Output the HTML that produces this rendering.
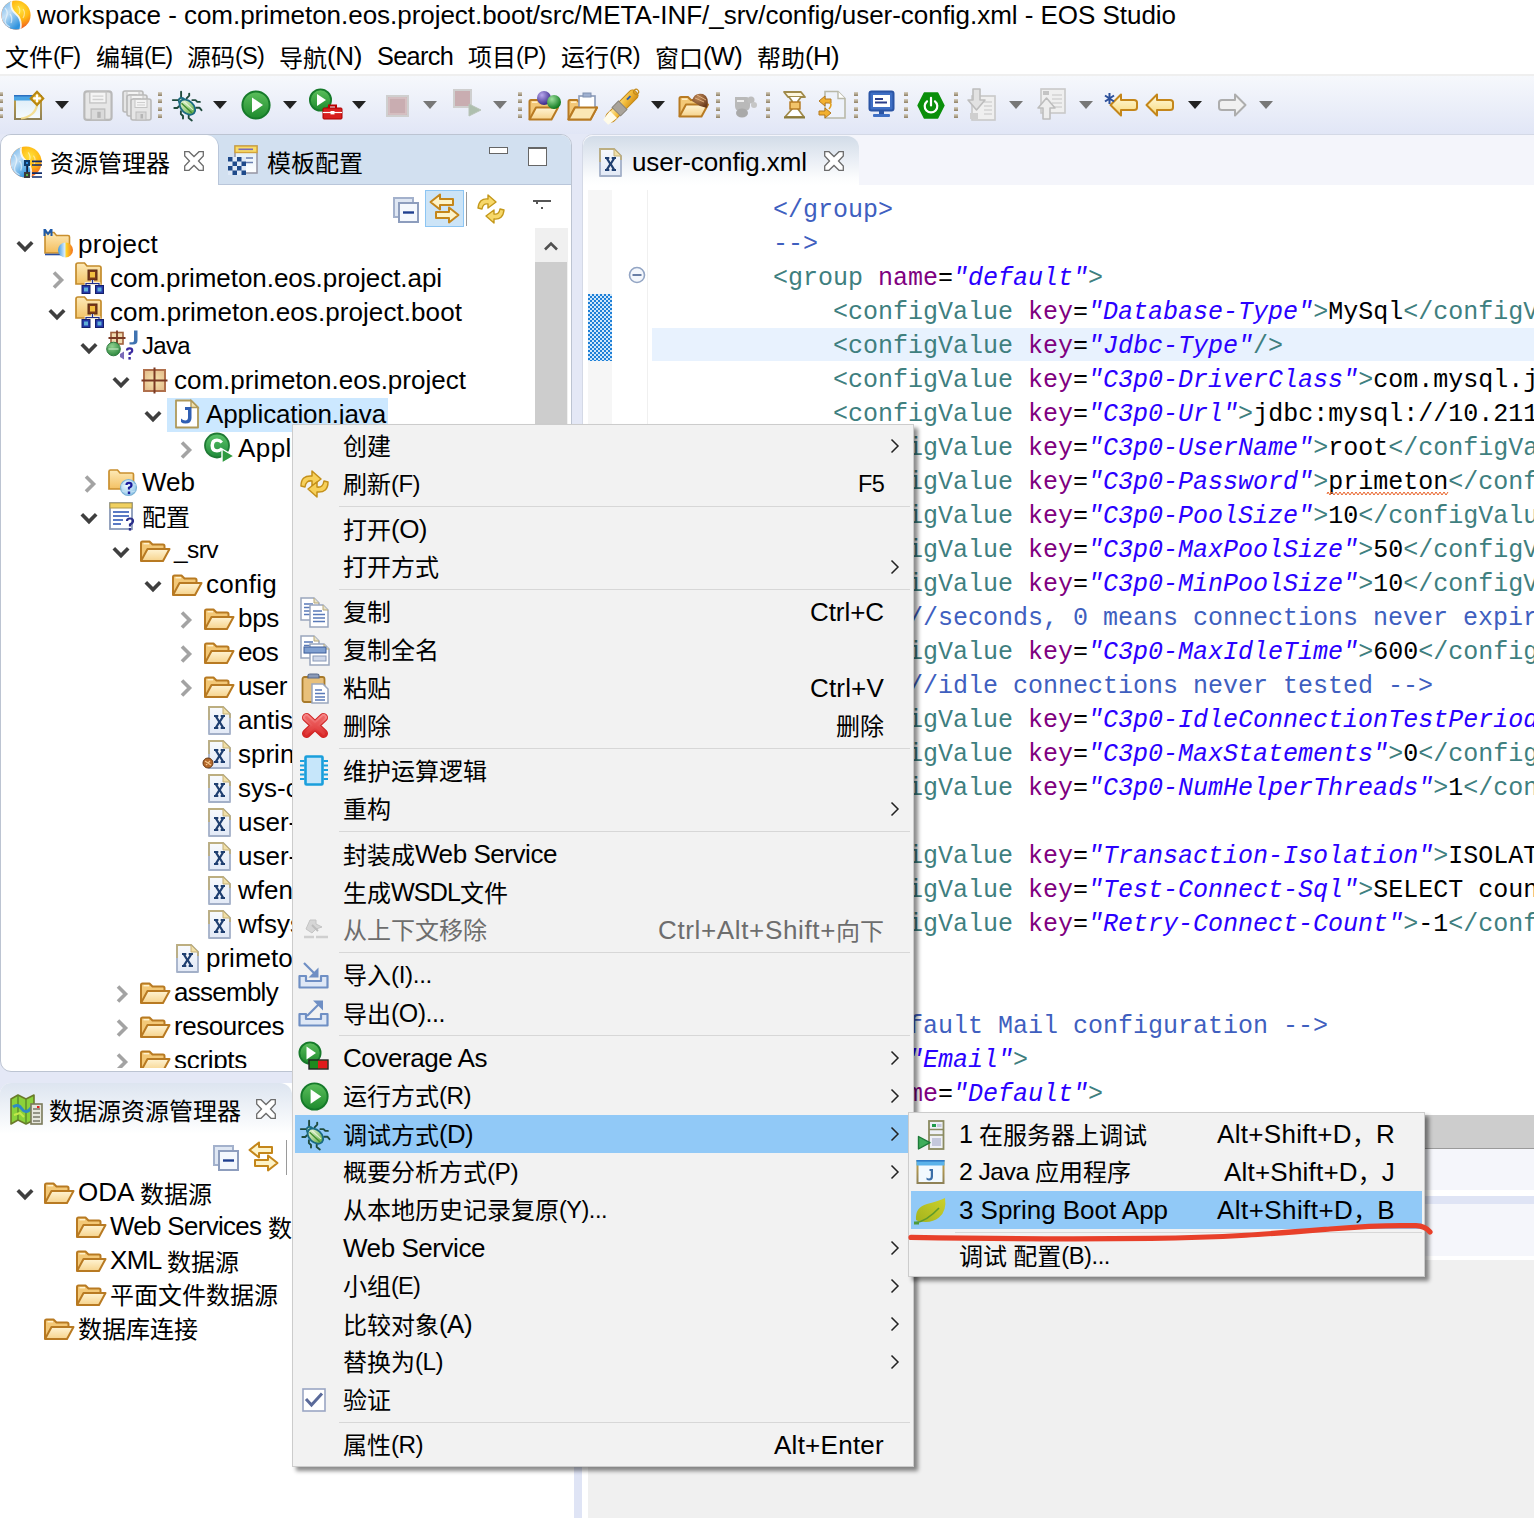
<!DOCTYPE html>
<html lang="zh-CN"><head><meta charset="utf-8"><title>EOS Studio</title>
<style>
html,body{margin:0;padding:0;background:#e4e8f6;}
body{width:1534px;height:1518px;position:relative;overflow:hidden;font-family:"Liberation Sans","Noto Sans CJK SC",sans-serif;}
.a{position:absolute;}
svg.a{overflow:visible}
.t{position:absolute;white-space:pre;font-size:24px;color:#000;font-family:"Liberation Sans","Noto Sans CJK SC",sans-serif;}
.l{font-size:26px;position:relative;top:-1.6px;}
.c{position:absolute;white-space:pre;font:25px/34px "Liberation Mono","Noto Sans CJK SC",monospace;color:#000;}
.m .l{top:-1.1px}
.cm{color:#3f5fbf}.tg{color:#3f7f7f}.at{color:#7f007f}.st{color:#2a00ff;font-style:italic}.tx{color:#000}
</style></head>
<body>
<div class="a" style="left:0px;top:0px;width:1534px;height:32px;background:#fff;"></div>
<svg class="a" style="left:1px;top:0px" width="30" height="30" viewBox="0 0 30 30"><defs><linearGradient id="g60" x1="0" y1="0" x2="0.6" y2="1"><stop offset="0" stop-color="#5aa8e6"/><stop offset=".5" stop-color="#c4e0f6"/><stop offset="1" stop-color="#2f93de"/></linearGradient><radialGradient id="g61" cx=".62" cy=".32" r=".6"><stop offset="0" stop-color="#ffe23c"/><stop offset=".55" stop-color="#ffb812"/><stop offset="1" stop-color="#f2661e"/></radialGradient><clipPath id="g62"><circle cx="15" cy="15" r="14.6"/></clipPath></defs><g clip-path="url(#g62)"><rect width="30" height="30" fill="url(#g61)"/><path d="M-1 -1H11Q8 8 15 14T19 31H-1Z" fill="url(#g60)"/><path d="M11 -1Q8 8 15 14T19 31" fill="none" stroke="#fff" stroke-width="1.8" opacity=".85"/><path d="M4 8Q8 12 5 18T9 27M9 14Q12 18 10 23" fill="none" stroke="#fff" stroke-width="1.3" opacity=".55"/><path d="M17 6Q20 10 18 14M22 9Q25 13 22 18" fill="none" stroke="#fff" stroke-width="1.1" opacity=".5"/></g></svg>
<div class="t " style="left:37px;top:-0.4px;line-height:34px;"><span class="l" style="letter-spacing:-0.036px;">workspace - com.primeton.eos.project.boot/src/META-INF/_srv/config/user-config.xml - EOS Studio</span></div>
<div class="a" style="left:0px;top:32px;width:1534px;height:42px;background:#fff;"></div>
<div class="t " style="left:5px;top:40.6px;line-height:34px;">文件<span class="l" style="font-size:23.50px;letter-spacing:-1.004px;">(F)</span></div>
<div class="t " style="left:96px;top:40.6px;line-height:34px;">编辑<span class="l" style="font-size:23.50px;letter-spacing:-1.113px;">(E)</span></div>
<div class="t " style="left:187px;top:40.6px;line-height:34px;">源码<span class="l" style="font-size:23.50px;letter-spacing:-0.779px;">(S)</span></div>
<div class="t " style="left:279px;top:40.6px;line-height:34px;">导航<span class="l" style="letter-spacing:-0.365px;">(N)</span></div>
<div class="t " style="left:377px;top:40.6px;line-height:34px;"><span class="l" style="font-size:25.25px;letter-spacing:-0.667px;">Search</span></div>
<div class="t " style="left:468px;top:40.6px;line-height:34px;">项目<span class="l" style="font-size:23.68px;letter-spacing:-0.526px;">(P)</span></div>
<div class="t " style="left:561px;top:40.6px;line-height:34px;">运行<span class="l" style="font-size:23.51px;letter-spacing:-0.544px;">(R)</span></div>
<div class="t " style="left:655px;top:40.6px;line-height:34px;">窗口<span class="l" style="font-size:25.50px;letter-spacing:-0.684px;">(W)</span></div>
<div class="t " style="left:757px;top:40.6px;line-height:34px;">帮助<span class="l" style="font-size:25.78px;letter-spacing:-0.596px;">(H)</span></div>
<div class="a" style="left:0px;top:74px;width:1534px;height:60px;background:linear-gradient(#f6f8fc,#e1e6f6);border-top:2px solid #efefef;box-sizing:border-box;"></div>
<div class="a" style="left:-1px;top:92px;width:4px;height:3.5px;background:linear-gradient(#d6cfbf,#8f8064);"></div><div class="a" style="left:-1px;top:99px;width:4px;height:3.5px;background:linear-gradient(#d6cfbf,#8f8064);"></div><div class="a" style="left:-1px;top:107px;width:4px;height:3.5px;background:linear-gradient(#d6cfbf,#8f8064);"></div><div class="a" style="left:-1px;top:114px;width:4px;height:3.5px;background:linear-gradient(#d6cfbf,#8f8064);"></div><svg class="a" style="left:14px;top:89px" width="32" height="32" viewBox="0 0 32 32"><defs><linearGradient id="g63" x1="0" y1="0" x2="0" y2="1"><stop offset="0" stop-color="#dcecf8"/><stop offset="1" stop-color="#f6fbfe"/></linearGradient><linearGradient id="g64" x1="0" y1="0" x2="0" y2="1"><stop offset="0" stop-color="#c8a448"/><stop offset="1" stop-color="#8f8257"/></linearGradient></defs><rect x="1" y="7" width="26" height="23" fill="url(#g63)" stroke="url(#g64)" stroke-width="2"/><rect x="0" y="6" width="28" height="5.500" fill="#4aa4e4"/><rect x="0" y="6" width="28" height="1.500" fill="#2b6fc0"/><path d="M7 29.500C16 28.500 22 23 23 16" fill="none" stroke="#f3dc8a" stroke-width="2.200" opacity=".9"/><path d="M23 2.800L29.300 9.400L23 16L16.700 9.400Z" fill="#e4b840" stroke="#b8860e" stroke-width="2"/><path d="M23 5.600V13.200M19.200 9.400H26.800" stroke="#fff" stroke-width="2.200"/></svg><svg class="a" style="left:55px;top:101px;" width="14" height="8" viewBox="0 0 14 8"><path d="M0 0H14L7 8Z" fill="#222"/></svg><svg class="a" style="left:83px;top:90px" width="31" height="31" viewBox="0 0 31 31"><g transform="scale(1.36)"><path d="M1 3Q1 1 3 1H19Q21 1 21 3V20Q21 22 19 22H3Q1 22 1 20Z" fill="#e6e6e6" stroke="#b9b9b9" stroke-width="1.6"/><rect x="5" y="1.5" width="12" height="8" fill="#f4f4f4" stroke="#c4c4c4" stroke-width="1"/><path d="M7 4.5H15M7 7H15" stroke="#cfcfcf" stroke-width="1"/><rect x="6" y="14" width="10" height="8" fill="#dadada" stroke="#bdbdbd" stroke-width="1"/><rect x="10.5" y="16" width="2.5" height="4.5" fill="#b5b5b5"/></g></svg><svg class="a" style="left:122px;top:90px" width="31" height="31" viewBox="0 0 31 31"><g transform="scale(1.0)"><g transform="translate(0,0)"><path d="M1 3Q1 1 3 1H19Q21 1 21 3V20Q21 22 19 22H3Q1 22 1 20Z" fill="#e6e6e6" stroke="#b9b9b9" stroke-width="1.6"/><rect x="5" y="1.5" width="12" height="8" fill="#f4f4f4" stroke="#c4c4c4" stroke-width="1"/><path d="M7 4.5H15M7 7H15" stroke="#cfcfcf" stroke-width="1"/><rect x="6" y="14" width="10" height="8" fill="#dadada" stroke="#bdbdbd" stroke-width="1"/><rect x="10.5" y="16" width="2.5" height="4.5" fill="#b5b5b5"/></g></g><g transform="translate(4,4)"><path d="M1 3Q1 1 3 1H19Q21 1 21 3V20Q21 22 19 22H3Q1 22 1 20Z" fill="#e6e6e6" stroke="#b9b9b9" stroke-width="1.6"/><rect x="5" y="1.5" width="12" height="8" fill="#f4f4f4" stroke="#c4c4c4" stroke-width="1"/><path d="M7 4.5H15M7 7H15" stroke="#cfcfcf" stroke-width="1"/><rect x="6" y="14" width="10" height="8" fill="#dadada" stroke="#bdbdbd" stroke-width="1"/><rect x="10.5" y="16" width="2.5" height="4.5" fill="#b5b5b5"/></g><g transform="translate(8,8)"><path d="M1 3Q1 1 3 1H19Q21 1 21 3V20Q21 22 19 22H3Q1 22 1 20Z" fill="#e6e6e6" stroke="#b9b9b9" stroke-width="1.6"/><rect x="5" y="1.5" width="12" height="8" fill="#f4f4f4" stroke="#c4c4c4" stroke-width="1"/><path d="M7 4.5H15M7 7H15" stroke="#cfcfcf" stroke-width="1"/><rect x="6" y="14" width="10" height="8" fill="#dadada" stroke="#bdbdbd" stroke-width="1"/><rect x="10.5" y="16" width="2.5" height="4.5" fill="#b5b5b5"/></g></svg><div class="a" style="left:158px;top:92px;width:4px;height:3.5px;background:linear-gradient(#d6cfbf,#8f8064);"></div><div class="a" style="left:158px;top:99px;width:4px;height:3.5px;background:linear-gradient(#d6cfbf,#8f8064);"></div><div class="a" style="left:158px;top:107px;width:4px;height:3.5px;background:linear-gradient(#d6cfbf,#8f8064);"></div><div class="a" style="left:158px;top:114px;width:4px;height:3.5px;background:linear-gradient(#d6cfbf,#8f8064);"></div><svg class="a" style="left:172px;top:91px" width="30" height="30" viewBox="0 0 30 30"><defs><linearGradient id="g65" x1="0" y1="0" x2="1" y2="0"><stop offset="0" stop-color="#e4f2d0"/><stop offset=".5" stop-color="#a8d490"/><stop offset="1" stop-color="#5fa848"/></linearGradient></defs><g stroke="#1f4a3c" stroke-width="1.900" fill="none" stroke-linecap="round" stroke-linejoin="round"><path d="M9.100 6.200V0.800M6.300 9.100H0.800"/><path d="M14.600 7.300L17.200 4.700V2.600"/><path d="M20.300 9.100H23.500L25.300 10.900H27.900"/><path d="M24.300 16.700H27.400L29.500 19.200"/><path d="M7.800 14.600L5.200 17H2.300"/><path d="M8.900 20.300V23L11 25V27.600"/><path d="M16.700 24.500V27.100L19.800 29.400"/></g><circle cx="9.600" cy="9.800" r="2.900" fill="#cfe8b8" stroke="#1a6a80" stroke-width="1.600"/><path d="M8.800 10.800L11 8.600L12 10.400L10.200 12Z" fill="#2f8a2a"/><g transform="rotate(42.700 15.400 16.100)"><ellipse cx="15.400" cy="16.100" rx="9" ry="6.100" fill="url(#g65)" stroke="#1a6a80" stroke-width="1.900"/><path d="M8.500 17.300H22.500" stroke="#3f8f2e" stroke-width="1.500"/><path d="M9 14.300H21.500" stroke="#f0f8e4" stroke-width="1.200" opacity=".8"/></g></svg><svg class="a" style="left:213px;top:101px;" width="14" height="8" viewBox="0 0 14 8"><path d="M0 0H14L7 8Z" fill="#222"/></svg><svg class="a" style="left:241px;top:90px" width="30" height="30" viewBox="0 0 30 30"><defs><linearGradient id="g66" x1="0" y1="0" x2="0" y2="1"><stop offset="0" stop-color="#5cbf5c"/><stop offset="1" stop-color="#1d8a2d"/></linearGradient></defs><circle cx="15" cy="15" r="13.6" fill="url(#g66)" stroke="#167a2a" stroke-width="2"/><path d="M11 7.5L22 15L11 22.5Z" fill="#fff"/></svg><svg class="a" style="left:283px;top:101px;" width="14" height="8" viewBox="0 0 14 8"><path d="M0 0H14L7 8Z" fill="#222"/></svg><svg class="a" style="left:308px;top:88px" width="35" height="33" viewBox="0 0 35 33"><defs><linearGradient id="g67" x1="0" y1="0" x2="0" y2="1"><stop offset="0" stop-color="#5cbf5c"/><stop offset="1" stop-color="#1d8a2d"/></linearGradient></defs><circle cx="12.5" cy="12" r="10.6" fill="url(#g67)" stroke="#167a2a" stroke-width="1.8"/><path d="M9 6L18 12L9 18Z" fill="#fff"/><rect x="15" y="20" width="19" height="11" rx="1" fill="#d81e1e" stroke="#a00" stroke-width="1"/><path d="M21 20V17.5H28V20" fill="none" stroke="#b00" stroke-width="2"/><path d="M15 24.5H34" stroke="#fff" stroke-width="1.2"/><rect x="22.5" y="23" width="4" height="3.4" fill="#fff"/></svg><svg class="a" style="left:352px;top:101px;" width="14" height="8" viewBox="0 0 14 8"><path d="M0 0H14L7 8Z" fill="#222"/></svg><svg class="a" style="left:386px;top:95px" width="23" height="22" viewBox="0 0 23 22"><rect x="1" y="1" width="21" height="20" fill="#c9adb1" stroke="#cfcfcf" stroke-width="2"/><rect x="3" y="3" width="17" height="16" fill="none" stroke="#d8c4c6" stroke-width="1.5"/></svg><svg class="a" style="left:423px;top:101px;" width="14" height="8" viewBox="0 0 14 8"><path d="M0 0H14L7 8Z" fill="#777"/></svg><svg class="a" style="left:453px;top:89px" width="30" height="29" viewBox="0 0 30 29"><rect x="1" y="1" width="17" height="17" fill="#c9adb1" stroke="#cfcfcf" stroke-width="2"/><path d="M16 15V27L28 21Z" fill="#aebfae" stroke="#b9c4b9" stroke-width="1"/></svg><svg class="a" style="left:493px;top:101px;" width="14" height="8" viewBox="0 0 14 8"><path d="M0 0H14L7 8Z" fill="#777"/></svg><div class="a" style="left:518px;top:92px;width:4px;height:3.5px;background:linear-gradient(#d6cfbf,#8f8064);"></div><div class="a" style="left:518px;top:99px;width:4px;height:3.5px;background:linear-gradient(#d6cfbf,#8f8064);"></div><div class="a" style="left:518px;top:107px;width:4px;height:3.5px;background:linear-gradient(#d6cfbf,#8f8064);"></div><div class="a" style="left:518px;top:114px;width:4px;height:3.5px;background:linear-gradient(#d6cfbf,#8f8064);"></div><svg class="a" style="left:528px;top:90px" width="34" height="31" viewBox="0 0 34 31"><defs><radialGradient id="g68" cx=".35" cy=".3" r=".7"><stop offset="0" stop-color="#b9a8ee"/><stop offset="1" stop-color="#3a2a8a"/></radialGradient><radialGradient id="g69" cx=".35" cy=".3" r=".7"><stop offset="0" stop-color="#9fe09f"/><stop offset="1" stop-color="#0f7a1f"/></radialGradient></defs><g transform="translate(0,8)"><defs><linearGradient id="g70" x1="0" y1="0" x2="0" y2="1"><stop offset="0" stop-color="#fff4d4"/><stop offset="1" stop-color="#f6d38c"/></linearGradient></defs><path d="M1.500 21.500V3.500Q1.500 2 3 2H10L13 5H23.500Q25 5 25 6.500V9.500" fill="#f3c877" stroke="#b87a22" stroke-width="2" stroke-linejoin="round"/><path d="M4 4.200H9.500" stroke="#fff1cc" stroke-width="1.400"/><path d="M1.500 21.500L8 9.500H30L23.500 21.500Z" fill="url(#g70)" stroke="#b87a22" stroke-width="2" stroke-linejoin="round"/></g><circle cx="16" cy="8" r="7" fill="url(#g68)"/><circle cx="26" cy="12" r="7" fill="url(#g69)"/></svg><svg class="a" style="left:567px;top:92px" width="32" height="29" viewBox="0 0 32 29"><g transform="translate(0,6)"><defs><linearGradient id="g71" x1="0" y1="0" x2="0" y2="1"><stop offset="0" stop-color="#fff4d4"/><stop offset="1" stop-color="#f6d38c"/></linearGradient></defs><path d="M1.500 21.500V3.500Q1.500 2 3 2H10L13 5H23.500Q25 5 25 6.500V9.500" fill="#f3c877" stroke="#b87a22" stroke-width="2" stroke-linejoin="round"/><path d="M4 4.200H9.500" stroke="#fff1cc" stroke-width="1.400"/><path d="M1.500 21.500L8 9.500H30L23.500 21.500Z" fill="url(#g71)" stroke="#b87a22" stroke-width="2" stroke-linejoin="round"/></g><rect x="12" y="4" width="16" height="12" fill="#fff" stroke="#8a9ab8" stroke-width="1.6"/><rect x="16" y="1" width="8" height="4" fill="#9fb0d0" stroke="#7f90b0" stroke-width="1"/><path d="M1.500 27.500L8 15.500H30L23.500 27.500Z" fill="#fbe7b4" stroke="#b87a22" stroke-width="2" stroke-linejoin="round"/></svg><svg class="a" style="left:606px;top:90px" width="33" height="32" viewBox="0 0 33 32"><defs><linearGradient id="g72" x1="0" y1="0" x2="1" y2="1"><stop offset="0" stop-color="#fff3c0"/><stop offset=".5" stop-color="#f5c040"/><stop offset="1" stop-color="#d08a10"/></linearGradient></defs><g transform="rotate(-45 16 16)"><rect x="-4" y="11" width="40" height="10" rx="4" fill="url(#g72)" stroke="#c48a1a" stroke-width="1"/><rect x="8" y="10" width="9" height="12" fill="#a9a39a" stroke="#8a857c" stroke-width="1"/><path d="M-7 12.500L4 11V21L-7 19.500Z" fill="#fffbe8"/><rect x="24" y="14" width="5" height="2" fill="#2b5fb0"/><circle cx="36" cy="16" r="2.5" fill="none" stroke="#c48a1a" stroke-width="1.2"/></g></svg><svg class="a" style="left:651px;top:101px;" width="14" height="8" viewBox="0 0 14 8"><path d="M0 0H14L7 8Z" fill="#222"/></svg><svg class="a" style="left:678px;top:92px" width="32" height="26" viewBox="0 0 32 26"><defs><radialGradient id="g73" cx=".4" cy=".3" r=".7"><stop offset="0" stop-color="#c08a5a"/><stop offset="1" stop-color="#6a3a1a"/></radialGradient></defs><g transform="translate(0,3)"><defs><linearGradient id="g74" x1="0" y1="0" x2="0" y2="1"><stop offset="0" stop-color="#fff4d4"/><stop offset="1" stop-color="#f6d38c"/></linearGradient></defs><path d="M1.500 21.500V3.500Q1.500 2 3 2H10L13 5H23.500Q25 5 25 6.500V9.500" fill="#f3c877" stroke="#b87a22" stroke-width="2" stroke-linejoin="round"/><path d="M4 4.200H9.500" stroke="#fff1cc" stroke-width="1.400"/><path d="M1.500 21.500L8 9.500H30L23.500 21.500Z" fill="url(#g74)" stroke="#b87a22" stroke-width="2" stroke-linejoin="round"/></g><path d="M14 9Q16 0 25 2Q32 5 29 16L22 14Z" fill="url(#g73)"/><path d="M17 6L26 10M19 3L28 8" stroke="#e0b080" stroke-width="1"/></svg><div class="a" style="left:716px;top:92px;width:4px;height:3.5px;background:linear-gradient(#d6cfbf,#8f8064);"></div><div class="a" style="left:716px;top:99px;width:4px;height:3.5px;background:linear-gradient(#d6cfbf,#8f8064);"></div><div class="a" style="left:716px;top:107px;width:4px;height:3.5px;background:linear-gradient(#d6cfbf,#8f8064);"></div><div class="a" style="left:716px;top:114px;width:4px;height:3.5px;background:linear-gradient(#d6cfbf,#8f8064);"></div><svg class="a" style="left:732px;top:94px" width="26" height="24" viewBox="0 0 26 24"><path d="M3 3H14Q18 3 18 8V12Q18 17 12 17H8Q3 17 3 12Z" fill="#b9b9b9"/><path d="M5 7H12" stroke="#eee" stroke-width="2"/><circle cx="19" cy="6" r="3.5" fill="#bdbdbd"/><circle cx="22" cy="11" r="3" fill="#c6c6c6"/><ellipse cx="10" cy="19" rx="6" ry="4.5" fill="#a9a9a9"/></svg><div class="a" style="left:766px;top:92px;width:4px;height:3.5px;background:linear-gradient(#d6cfbf,#8f8064);"></div><div class="a" style="left:766px;top:99px;width:4px;height:3.5px;background:linear-gradient(#d6cfbf,#8f8064);"></div><div class="a" style="left:766px;top:107px;width:4px;height:3.5px;background:linear-gradient(#d6cfbf,#8f8064);"></div><div class="a" style="left:766px;top:114px;width:4px;height:3.5px;background:linear-gradient(#d6cfbf,#8f8064);"></div><svg class="a" style="left:782px;top:90px" width="25" height="30" viewBox="0 0 25 30"><path d="M2 2H19L23 7H6Z" fill="#fdf6dc" stroke="#a08a4a" stroke-width="1.8" stroke-linejoin="round"/><path d="M7 7L10 11V19L3 27H22L16 19V11L19 7" fill="#fff" stroke="#a08a4a" stroke-width="1.8" stroke-linejoin="round"/><rect x="8" y="12" width="10" height="7" fill="#f2c46a" stroke="#b4781e" stroke-width="1.4"/><path d="M2 27.5H23" stroke="#8a7a3a" stroke-width="2"/></svg><svg class="a" style="left:817px;top:90px" width="30" height="30" viewBox="0 0 30 30"><path d="M8 1.5H21L28 8.5V28H8Z" fill="#eef2fa" stroke="#b9b9a9" stroke-width="1.6"/><path d="M21 1.5V8.5H28" fill="#fff" stroke="#b9b9a9" stroke-width="1.4"/><path d="M2 11L8 6V9H14V13H8V16Z" fill="#f2b030" stroke="#b4781e" stroke-width="1"/><path d="M14 23L8 18V21H2V25H8V28Z" fill="#f2b030" stroke="#b4781e" stroke-width="1"/><path d="M12 12Q16 14 12 19" fill="none" stroke="#e0a020" stroke-width="1.6"/></svg><div class="a" style="left:854px;top:92px;width:4px;height:3.5px;background:linear-gradient(#d6cfbf,#8f8064);"></div><div class="a" style="left:854px;top:99px;width:4px;height:3.5px;background:linear-gradient(#d6cfbf,#8f8064);"></div><div class="a" style="left:854px;top:107px;width:4px;height:3.5px;background:linear-gradient(#d6cfbf,#8f8064);"></div><div class="a" style="left:854px;top:114px;width:4px;height:3.5px;background:linear-gradient(#d6cfbf,#8f8064);"></div><svg class="a" style="left:868px;top:90px" width="27" height="28" viewBox="0 0 27 28"><rect x="1.5" y="1.5" width="24" height="19" rx="2" fill="#3f6fc4" stroke="#2b55a5" stroke-width="2"/><rect x="5" y="5" width="17" height="12" fill="#fff"/><path d="M7 9H15M7 12.5H19" stroke="#2b3f8a" stroke-width="1.8"/><rect x="11" y="21" width="5" height="3" fill="#2b55a5"/><rect x="5" y="24" width="17" height="3" rx="1" fill="#3f6fc4"/></svg><div class="a" style="left:904px;top:92px;width:4px;height:3.5px;background:linear-gradient(#d6cfbf,#8f8064);"></div><div class="a" style="left:904px;top:99px;width:4px;height:3.5px;background:linear-gradient(#d6cfbf,#8f8064);"></div><div class="a" style="left:904px;top:107px;width:4px;height:3.5px;background:linear-gradient(#d6cfbf,#8f8064);"></div><div class="a" style="left:904px;top:114px;width:4px;height:3.5px;background:linear-gradient(#d6cfbf,#8f8064);"></div><svg class="a" style="left:917px;top:92px" width="28" height="27" viewBox="0 0 28 27"><path d="M7.300 1H20.700L27 13.500L20.700 26H7.300L1 13.500Z" fill="#0a8f0a" stroke="#0a8f0a" stroke-width="1.400" stroke-linejoin="round"/><path d="M10 9.300A6.300 6.300 0 1 0 18 9.300" fill="none" stroke="#fff" stroke-width="2.200" stroke-linecap="round"/><path d="M14 5.800V13.400" stroke="#fff" stroke-width="2.200" stroke-linecap="round"/></svg><div class="a" style="left:954px;top:92px;width:4px;height:3.5px;background:linear-gradient(#d6cfbf,#8f8064);"></div><div class="a" style="left:954px;top:99px;width:4px;height:3.5px;background:linear-gradient(#d6cfbf,#8f8064);"></div><div class="a" style="left:954px;top:107px;width:4px;height:3.5px;background:linear-gradient(#d6cfbf,#8f8064);"></div><div class="a" style="left:954px;top:114px;width:4px;height:3.5px;background:linear-gradient(#d6cfbf,#8f8064);"></div><svg class="a" style="left:967px;top:88px" width="28" height="33" viewBox="0 0 28 33"><rect x="5" y="8" width="23" height="24" fill="#efefef" stroke="#c9c9c9" stroke-width="1.600"/><path d="M17 14H25M17 18H25M17 22H25M17 26H25" stroke="#d4d4d4" stroke-width="1.600"/><path d="M6 1H13V12H18L9.5 22L1 12H6Z" fill="#e2e2e2" stroke="#bdbdbd" stroke-width="1.6" stroke-linejoin="round"/><rect x="3" y="25" width="8" height="6" fill="#cfcfcf"/></svg><svg class="a" style="left:1009px;top:101px;" width="14" height="8" viewBox="0 0 14 8"><path d="M0 0H14L7 8Z" fill="#777"/></svg><svg class="a" style="left:1037px;top:88px" width="28" height="33" viewBox="0 0 28 33"><rect x="4" y="1" width="24" height="24" fill="#efefef" stroke="#c9c9c9" stroke-width="1.600"/><path d="M15 7H25M15 11H25M15 15H25M15 19H25" stroke="#d4d4d4" stroke-width="1.600"/><rect x="6" y="3" width="6" height="4" fill="#c4c4c4"/><path d="M6 31H13V20H18L9.5 10L1 20H6Z" fill="#ededed" stroke="#bdbdbd" stroke-width="1.6" stroke-linejoin="round"/></svg><svg class="a" style="left:1079px;top:101px;" width="14" height="8" viewBox="0 0 14 8"><path d="M0 0H14L7 8Z" fill="#777"/></svg><svg class="a" style="left:1104px;top:92px" width="35" height="26" viewBox="0 0 35 26"><defs><linearGradient id="g75" x1="0" y1="0" x2="0" y2="1"><stop offset="0" stop-color="#fffbe0"/><stop offset="1" stop-color="#f8d87a"/></linearGradient></defs><g transform="translate(5,1)"><path d="M12 1.5L1.5 12L12 22.5V17H25Q28 17 28 14.5V9.5Q28 7 25 7H12Z" fill="url(#g75)" stroke="#c4861a" stroke-width="2" stroke-linejoin="round"/></g><path d="M5.5 1V12M1 3.5L10 9.5M10 3.5L1 9.5" stroke="#2b4f9a" stroke-width="2"/></svg><svg class="a" style="left:1145px;top:93px" width="30" height="24" viewBox="0 0 30 24"><defs><linearGradient id="g76" x1="0" y1="0" x2="0" y2="1"><stop offset="0" stop-color="#fffbe0"/><stop offset="1" stop-color="#f8d87a"/></linearGradient></defs><path d="M12 1.5L1.5 12L12 22.5V17H25Q28 17 28 14.5V9.5Q28 7 25 7H12Z" fill="url(#g76)" stroke="#c4861a" stroke-width="2" stroke-linejoin="round"/></svg><svg class="a" style="left:1188px;top:101px;" width="14" height="8" viewBox="0 0 14 8"><path d="M0 0H14L7 8Z" fill="#222"/></svg><svg class="a" style="left:1217px;top:93px" width="30" height="24" viewBox="0 0 30 24"><g transform="translate(30,0) scale(-1,1)"><path d="M12 1.5L1.5 12L12 22.5V17H25Q28 17 28 14.5V9.5Q28 7 25 7H12Z" fill="#f1f1f1" stroke="#adadad" stroke-width="2" stroke-linejoin="round"/></g></svg><svg class="a" style="left:1259px;top:101px;" width="14" height="8" viewBox="0 0 14 8"><path d="M0 0H14L7 8Z" fill="#777"/></svg>
<div class="a" style="left:0px;top:134px;width:1534px;height:1384px;background:#e4e8f6;"></div>
<div class="a" style="left:0px;top:134px;width:572px;height:938px;background:#fff;border:1px solid #bcc4d2;border-radius:11px;box-sizing:border-box;overflow:hidden;"></div><div class="a" style="left:1px;top:135px;width:570px;height:50px;background:#d2e0f0;border-radius:10px 10px 0 0;border-bottom:1px solid #b9c6da;box-sizing:border-box;"></div><div class="a" style="left:1px;top:135px;width:218px;height:50px;background:#fff;border-radius:10px 12px 0 0;border-right:1px solid #b9c6da;box-sizing:border-box;"></div><svg class="a" style="left:10px;top:146px" width="33" height="33" viewBox="0 0 33 33"><g transform="scale(1.067)"><defs><linearGradient id="g77" x1="0" y1="0" x2="0.6" y2="1"><stop offset="0" stop-color="#5aa8e6"/><stop offset=".5" stop-color="#c4e0f6"/><stop offset="1" stop-color="#2f93de"/></linearGradient><radialGradient id="g78" cx=".62" cy=".32" r=".6"><stop offset="0" stop-color="#ffe23c"/><stop offset=".55" stop-color="#ffb812"/><stop offset="1" stop-color="#f2661e"/></radialGradient><clipPath id="g79"><circle cx="15" cy="15" r="14.6"/></clipPath></defs><g clip-path="url(#g79)"><rect width="30" height="30" fill="url(#g78)"/><path d="M-1 -1H11Q8 8 15 14T19 31H-1Z" fill="url(#g77)"/><path d="M11 -1Q8 8 15 14T19 31" fill="none" stroke="#fff" stroke-width="1.8" opacity=".85"/><path d="M4 8Q8 12 5 18T9 27M9 14Q12 18 10 23" fill="none" stroke="#fff" stroke-width="1.3" opacity=".55"/><path d="M17 6Q20 10 18 14M22 9Q25 13 22 18" fill="none" stroke="#fff" stroke-width="1.1" opacity=".5"/></g></g><rect x="14" y="14" width="6" height="6" fill="#0f3a6a"/><rect x="16" y="16" width="2" height="2" fill="#2f8ae0"/><rect x="14" y="26" width="6" height="6" fill="#3a3a3a"/><rect x="16" y="28" width="2" height="2" fill="#5ab84a"/><rect x="16.3" y="20" width="1.6" height="6" fill="#0a1030"/><path d="M22 15.300H32M22 19H32M22 27.200H32M22 31H32" stroke="#0f2a6a" stroke-width="1.700"/></svg><div class="t " style="left:50px;top:146.6px;line-height:34px;">资源管理器</div><svg class="a" style="left:184px;top:151px;" width="20" height="20" viewBox="0 0 20 20"><path d="M0.700 0.700H5L10 5.500L15 0.700H19.300V5L14.500 10L19.300 15V19.300H15L10 14.500L5 19.300H0.700V15L5.500 10L0.700 5Z" fill="#fff" stroke="#6b6b6b" stroke-width="1.300" stroke-linejoin="miter"/></svg><svg class="a" style="left:228px;top:145px" width="31" height="31" viewBox="0 0 31 31"><defs><linearGradient id="g80" x1="0" y1="0" x2="0" y2="1"><stop offset="0" stop-color="#dcecf8"/><stop offset="1" stop-color="#fff"/></linearGradient></defs><rect x="7" y="1" width="22" height="27" fill="url(#g80)" stroke="#9a9aa8" stroke-width="1.600"/><rect x="7" y="1" width="22" height="6.500" fill="#f8dc6a" stroke="#d4a43a" stroke-width="1.400"/><path d="M10.500 4.300H25" stroke="#7a6ab8" stroke-width="1.600"/><path d="M14 13H25M14 17.500H25" stroke="#6a7fb0" stroke-width="1.600"/><rect x="0" y="12" width="18" height="18" fill="#dfe9f6"/><path d="M0 12h4.5v4.5h-4.5zM0 21h4.5v4.5h-4.5zM4.5 16.5h4.5v4.5h-4.5zM4.5 25.5h4.5v4.5h-4.5zM9 12h4.5v4.5h-4.5zM9 21h4.5v4.5h-4.5zM13.5 16.5h4.5v4.5h-4.5zM13.5 25.5h4.5v4.5h-4.5z" fill="#1f4a8a"/></svg><div class="t " style="left:267px;top:146.6px;line-height:34px;">模板配置</div><div class="a" style="left:489px;top:147px;width:19px;height:7px;background:#fff;border:1px solid #666;box-sizing:border-box;"></div><div class="a" style="left:528px;top:147px;width:19px;height:19px;background:#fff;border:1px solid #666;border-top:2px solid #666;box-sizing:border-box;"></div><svg class="a" style="left:393px;top:197px" width="26" height="26" viewBox="0 0 26 26"><rect x="1" y="1" width="19" height="19" fill="#dfe7f3" stroke="#a3b1cc" stroke-width="2"/><rect x="6" y="6" width="19" height="19" fill="#f4f8fd" stroke="#8d9dbd" stroke-width="2"/><path d="M10 15.5H21" stroke="#1f3f8f" stroke-width="2.4"/></svg><div class="a" style="left:425px;top:190px;width:39px;height:37px;background:#cce4f7;border:1px solid #8cc5f3;box-sizing:border-box;"></div><svg class="a" style="left:429px;top:193px" width="31" height="31" viewBox="0 0 31 31"><path d="M11 1.5L1.5 9L11 16.5V12H24V6H11Z" fill="#fdf3c8" stroke="#c4861a" stroke-width="2" stroke-linejoin="round"/><path d="M20 14.5L29.5 22L20 29.5V25H7V19H20Z" fill="#fdf3c8" stroke="#c4861a" stroke-width="2" stroke-linejoin="round"/></svg><div class="a" style="left:466px;top:192px;width:1px;height:34px;background:#9a9a9a;"></div><svg class="a" style="left:476px;top:194px" width="30" height="30" viewBox="0 0 30 30"><path d="M2 14Q3 4 12 5L12 1L20 8L12 14V10Q7 9 6 15Z" fill="#f7d86a" stroke="#c4981a" stroke-width="1.4" stroke-linejoin="round"/><path d="M28 16Q27 26 18 25V29L10 22L18 16V20Q23 21 24 15Z" fill="#f7d86a" stroke="#c4981a" stroke-width="1.4" stroke-linejoin="round"/></svg><div class="a" style="left:533px;top:200px;width:18px;height:2px;background:#555;"></div><div class="a" style="left:536px;top:202px;width:2px;height:2px;background:#555;"></div><div class="a" style="left:541px;top:207px;width:2px;height:2px;background:#555;"></div><div class="a" style="left:535px;top:228px;width:33px;height:843px;background:#f0f0f0;"></div><svg class="a" style="left:543px;top:241px;" width="16" height="10" viewBox="0 0 16 10"><path d="M2 8.5L8 2.5L14 8.5" fill="none" stroke="#505050" stroke-width="2.6"/></svg><div class="a" style="left:535px;top:262px;width:32px;height:400px;background:#cdcdcd;"></div><div class="a" style="left:1px;top:228px;width:534px;height:840px;overflow:hidden"><div class="a" style="left:-1px;top:-228px"><svg class="a" style="left:16px;top:240px;" width="18" height="13" viewBox="0 0 18 13"><path d="M1.800 2.200L9 9.600L16.200 2.200" fill="none" stroke="#3f3f3f" stroke-width="3.600"/></svg><svg class="a" style="left:43px;top:228px" width="32" height="32" viewBox="0 0 32 32"><defs><linearGradient id="g81" x1="0" y1="0" x2="0" y2="1"><stop offset="0" stop-color="#fdeab8"/><stop offset="1" stop-color="#f3bd5c"/></linearGradient><linearGradient id="g82" x1="0" y1="0" x2="1" y2="0"><stop offset="0" stop-color="#3f98e0"/><stop offset=".45" stop-color="#d8ecfa"/><stop offset=".55" stop-color="#ffd428"/><stop offset="1" stop-color="#f2701e"/></linearGradient></defs><path d="M2 25V6Q2 4.500 3.500 4.500H11L13.500 7.500H25Q26.500 7.500 26.500 9V25Z" fill="url(#g81)" stroke="#c98f2e" stroke-width="1.600"/><path d="M2 26.500H20" stroke="#2b4fa0" stroke-width="1.600"/><path d="M0.500 8V1H2.800L5 4.500L7.200 1H9.500V8H7.500V4.500L5 7.500L2.500 4.500V8Z" fill="#1f5aa8"/><circle cx="22.500" cy="22" r="7.500" fill="url(#g82)"/></svg><div class="t tr" style="left:78px;top:228.6px;line-height:34px;"><span class="l" style="letter-spacing:0.279px;">project</span></div><svg class="a" style="left:52px;top:271px;" width="13" height="18" viewBox="0 0 13 18"><path d="M2 1.500L9.500 9L2 16.500" fill="none" stroke="#a3a3a3" stroke-width="3.600"/></svg><svg class="a" style="left:75px;top:262px" width="32" height="33" viewBox="0 0 32 33"><defs><linearGradient id="g84" x1="0" y1="0" x2="0" y2="1"><stop offset="0" stop-color="#fdeab8"/><stop offset="1" stop-color="#f3c468"/></linearGradient></defs><path d="M1 22V3Q1 1 3 1H9.500L12 4H24Q26 4 26 6V22Z" fill="url(#g84)" stroke="#c48c2c" stroke-width="1.700"/><rect x="13" y="8" width="9" height="10" fill="#7a3a1a" stroke="#5a2a14" stroke-width="1"/><rect x="15" y="10" width="5" height="5.500" fill="#f2c040"/><path d="M17.500 18V21.500M11 25V21.500H24V25" fill="none" stroke="#f4f4f8" stroke-width="2.600"/><path d="M17.500 18V21.500M11 25V21.500H24V25" fill="none" stroke="#1f2f8a" stroke-width="1.200"/><rect x="7" y="23.500" width="8" height="8" fill="#2438a8" stroke="#14206a" stroke-width="1"/><rect x="9" y="25.500" width="4" height="4" fill="#5fb0d8"/><rect x="20.500" y="23.500" width="8" height="8" fill="#2438a8" stroke="#14206a" stroke-width="1"/><rect x="22.500" y="25.500" width="4" height="4" fill="#5fb0d8"/></svg><div class="t tr" style="left:110px;top:262.6px;line-height:34px;"><span class="l" style="letter-spacing:-0.065px;">com.primeton.eos.project.api</span></div><svg class="a" style="left:48px;top:308px;" width="18" height="13" viewBox="0 0 18 13"><path d="M1.800 2.200L9 9.600L16.200 2.200" fill="none" stroke="#3f3f3f" stroke-width="3.600"/></svg><svg class="a" style="left:75px;top:296px" width="32" height="33" viewBox="0 0 32 33"><defs><linearGradient id="g85" x1="0" y1="0" x2="0" y2="1"><stop offset="0" stop-color="#fdeab8"/><stop offset="1" stop-color="#f3c468"/></linearGradient></defs><path d="M1 22V3Q1 1 3 1H9.500L12 4H24Q26 4 26 6V22Z" fill="url(#g85)" stroke="#c48c2c" stroke-width="1.700"/><rect x="13" y="8" width="9" height="10" fill="#7a3a1a" stroke="#5a2a14" stroke-width="1"/><rect x="15" y="10" width="5" height="5.500" fill="#f2c040"/><path d="M17.500 18V21.500M11 25V21.500H24V25" fill="none" stroke="#f4f4f8" stroke-width="2.600"/><path d="M17.500 18V21.500M11 25V21.500H24V25" fill="none" stroke="#1f2f8a" stroke-width="1.200"/><rect x="7" y="23.500" width="8" height="8" fill="#2438a8" stroke="#14206a" stroke-width="1"/><rect x="9" y="25.500" width="4" height="4" fill="#5fb0d8"/><rect x="20.500" y="23.500" width="8" height="8" fill="#2438a8" stroke="#14206a" stroke-width="1"/><rect x="22.500" y="25.500" width="4" height="4" fill="#5fb0d8"/></svg><div class="t tr" style="left:110px;top:296.6px;line-height:34px;"><span class="l" style="letter-spacing:0.078px;">com.primeton.eos.project.boot</span></div><svg class="a" style="left:80px;top:342px;" width="18" height="13" viewBox="0 0 18 13"><path d="M1.800 2.200L9 9.600L16.200 2.200" fill="none" stroke="#3f3f3f" stroke-width="3.600"/></svg><svg class="a" style="left:107px;top:330px" width="32" height="32" viewBox="0 0 32 32"><defs><radialGradient id="g86" cx=".4" cy=".3" r=".7"><stop offset="0" stop-color="#8fd08f"/><stop offset="1" stop-color="#2f8a3f"/></radialGradient></defs><rect x="4" y="2.500" width="12" height="11.500" fill="#f0dcb0" stroke="#a0603c" stroke-width="1.600"/><path d="M1.500 8H18.500M10 0.500V16" stroke="#7a3a24" stroke-width="1.800"/><path d="M27 0.500H30.500V10.500Q30.500 14.500 26 14.500H22.500V12.200H25.500Q27 12.200 27 10Z" fill="#3f72b0"/><circle cx="6.500" cy="19" r="6.800" fill="url(#g86)" stroke="#2f7a3f" stroke-width="1"/><path d="M1.500 19H11.500" stroke="#bfe4bf" stroke-width="1.200"/><path d="M13 24L17 21.500V29.500L13 27Z" fill="#7a6ab8"/><path d="M20 20.500Q20 18.300 22.600 18.300T25.200 20.500Q25.200 22.300 22.600 23.300V25" fill="none" stroke="#3a2aa0" stroke-width="2.200"/><rect x="21.400" y="27" width="2.400" height="2.600" fill="#3a2aa0"/></svg><div class="t tr" style="left:142px;top:330.6px;line-height:34px;"><span class="l" style="font-size:23.92px;letter-spacing:-0.632px;">Java</span></div><svg class="a" style="left:112px;top:376px;" width="18" height="13" viewBox="0 0 18 13"><path d="M1.800 2.200L9 9.600L16.200 2.200" fill="none" stroke="#3f3f3f" stroke-width="3.600"/></svg><svg class="a" style="left:139px;top:365px" width="32" height="32" viewBox="0 0 32 32"><defs><radialGradient id="g87" cx=".5" cy=".5" r=".7"><stop offset="0" stop-color="#f6e6b0"/><stop offset="1" stop-color="#e2b888"/></radialGradient></defs><rect x="5" y="5" width="21" height="21" fill="url(#g87)" stroke="#b0704c" stroke-width="2"/><path d="M2.500 15.500H28.500M15.500 2.500V28.500" stroke="#7a3a24" stroke-width="2"/></svg><div class="t tr" style="left:174px;top:364.6px;line-height:34px;"><span class="l">com.primeton.eos.project</span></div><div class="a" style="left:167px;top:398px;width:221px;height:34px;background:#cce8ff;"></div><svg class="a" style="left:144px;top:410px;" width="18" height="13" viewBox="0 0 18 13"><path d="M1.800 2.200L9 9.600L16.200 2.200" fill="none" stroke="#3f3f3f" stroke-width="3.600"/></svg><svg class="a" style="left:171px;top:398px" width="32" height="32" viewBox="0 0 32 32"><path d="M5 2.500H20L27 9.500V29.500H5Z" fill="#fff" stroke="#b09a5a" stroke-width="1.8" stroke-linejoin="round"/><path d="M20 2.500V9.500H27Z" fill="#f2e2b0" stroke="#b09a5a" stroke-width="1.4"/><path d="M14 9H20.500V20Q20.500 25.500 14.500 25.500Q11.500 25.500 10 24V20.500Q12 22.500 14.200 22.500Q17 22.500 17 19.500V12H14Z" fill="#2f5fb4"/></svg><div class="t tr" style="left:206px;top:398.6px;line-height:34px;"><span class="l" style="letter-spacing:-0.133px;">Application.java</span></div><svg class="a" style="left:180px;top:441px;" width="13" height="18" viewBox="0 0 13 18"><path d="M2 1.500L9.500 9L2 16.500" fill="none" stroke="#a3a3a3" stroke-width="3.600"/></svg><svg class="a" style="left:203px;top:432px" width="32" height="32" viewBox="0 0 32 32"><defs><linearGradient id="g88" x1="0" y1="0" x2="0" y2="1"><stop offset="0" stop-color="#5cc46a"/><stop offset="1" stop-color="#1f8a3a"/></linearGradient></defs><circle cx="14" cy="13.500" r="12" fill="url(#g88)" stroke="#1f7a34" stroke-width="1.8"/><path d="M20 9.500Q17.500 6.500 14 6.500Q7.500 6.500 7.500 13.500T14 20.500Q17.500 20.500 20 17.500L17.800 15.500Q16.200 17.300 14.200 17.300Q11 17.300 11 13.500T14.200 9.700Q16.200 9.700 17.800 11.500Z" fill="#fff"/><path d="M19 17L31 24L19 31Z" fill="#2f9a3f" stroke="#fff" stroke-width="1.4"/></svg><div class="t tr" style="left:238px;top:432.6px;line-height:34px;"><span class="l" style="letter-spacing:0.436px;">Application</span></div><svg class="a" style="left:84px;top:475px;" width="13" height="18" viewBox="0 0 13 18"><path d="M2 1.500L9.500 9L2 16.500" fill="none" stroke="#a3a3a3" stroke-width="3.600"/></svg><svg class="a" style="left:107px;top:466px" width="32" height="32" viewBox="0 0 32 32"><defs><radialGradient id="g89" cx=".4" cy=".35" r=".7"><stop offset="0" stop-color="#f4fbff"/><stop offset="1" stop-color="#8ac4e8"/></radialGradient><linearGradient id="g90" x1="0" y1="0" x2="0" y2="1"><stop offset="0" stop-color="#fdeab8"/><stop offset="1" stop-color="#f3c062"/></linearGradient></defs><path d="M2 23V5.500Q2 4 3.500 4H10.500L13 7H25Q26.500 7 26.500 8.500V23Z" fill="url(#g90)" stroke="#c98f2e" stroke-width="1.700"/><circle cx="21.500" cy="21.500" r="8" fill="url(#g89)" stroke="#7ab0d4" stroke-width="1.200"/><path d="M14 19Q21 16 29 19M14.500 25Q21 28 28.500 25" fill="none" stroke="#bfe0f4" stroke-width="1"/><path d="M19.500 19Q19.500 16.800 22 16.800T24.500 19Q24.500 20.800 22 21.800V23.500" fill="none" stroke="#1a1a9a" stroke-width="2.200"/><rect x="20.800" y="25.500" width="2.400" height="2.600" fill="#1a1a9a"/></svg><div class="t tr" style="left:142px;top:466.6px;line-height:34px;"><span class="l">Web</span></div><svg class="a" style="left:80px;top:512px;" width="18" height="13" viewBox="0 0 18 13"><path d="M1.800 2.200L9 9.600L16.200 2.200" fill="none" stroke="#3f3f3f" stroke-width="3.600"/></svg><svg class="a" style="left:107px;top:500px" width="32" height="32" viewBox="0 0 32 32"><rect x="3" y="3" width="22" height="26" fill="#fff" stroke="#8a9ab8" stroke-width="1.8"/><rect x="3" y="3" width="22" height="5" fill="#f0d060" stroke="#b09a4a" stroke-width="1"/><path d="M6 12H22M6 16H22M6 20H16M6 24H14" stroke="#5a7ac4" stroke-width="1.8"/><path d="M20 21Q20 18.500 23 18.500T26 21Q26 23 23 24.500V26.500" fill="none" stroke="#2b2f8a" stroke-width="2.200"/><rect x="21.800" y="28" width="2.400" height="2.600" fill="#2b2f8a"/></svg><div class="t tr" style="left:142px;top:500.6px;line-height:34px;">配置</div><svg class="a" style="left:112px;top:546px;" width="18" height="13" viewBox="0 0 18 13"><path d="M1.800 2.200L9 9.600L16.200 2.200" fill="none" stroke="#3f3f3f" stroke-width="3.600"/></svg><svg class="a" style="left:139px;top:534px" width="32" height="32" viewBox="0 0 32 32"><g transform="translate(0.5,5.5)"><defs><linearGradient id="g91" x1="0" y1="0" x2="0" y2="1"><stop offset="0" stop-color="#fff4d4"/><stop offset="1" stop-color="#f6d38c"/></linearGradient></defs><path d="M1.500 21.500V3.500Q1.500 2 3 2H10L13 5H23.500Q25 5 25 6.500V9.500" fill="#f3c877" stroke="#b87a22" stroke-width="2" stroke-linejoin="round"/><path d="M4 4.200H9.500" stroke="#fff1cc" stroke-width="1.400"/><path d="M1.500 21.500L8 9.500H30L23.500 21.500Z" fill="url(#g91)" stroke="#b87a22" stroke-width="2" stroke-linejoin="round"/></g></svg><div class="t tr" style="left:174px;top:534.6px;line-height:34px;"><span class="l" style="font-size:24.51px;letter-spacing:-0.579px;">_srv</span></div><svg class="a" style="left:144px;top:580px;" width="18" height="13" viewBox="0 0 18 13"><path d="M1.800 2.200L9 9.600L16.200 2.200" fill="none" stroke="#3f3f3f" stroke-width="3.600"/></svg><svg class="a" style="left:171px;top:568px" width="32" height="32" viewBox="0 0 32 32"><g transform="translate(0.5,5.5)"><defs><linearGradient id="g92" x1="0" y1="0" x2="0" y2="1"><stop offset="0" stop-color="#fff4d4"/><stop offset="1" stop-color="#f6d38c"/></linearGradient></defs><path d="M1.500 21.500V3.500Q1.500 2 3 2H10L13 5H23.500Q25 5 25 6.500V9.500" fill="#f3c877" stroke="#b87a22" stroke-width="2" stroke-linejoin="round"/><path d="M4 4.200H9.500" stroke="#fff1cc" stroke-width="1.400"/><path d="M1.500 21.500L8 9.500H30L23.500 21.500Z" fill="url(#g92)" stroke="#b87a22" stroke-width="2" stroke-linejoin="round"/></g></svg><div class="t tr" style="left:206px;top:568.6px;line-height:34px;"><span class="l" style="letter-spacing:0.268px;">config</span></div><svg class="a" style="left:180px;top:611px;" width="13" height="18" viewBox="0 0 13 18"><path d="M2 1.500L9.500 9L2 16.500" fill="none" stroke="#a3a3a3" stroke-width="3.600"/></svg><svg class="a" style="left:203px;top:602px" width="32" height="32" viewBox="0 0 32 32"><g transform="translate(0.5,5.5)"><defs><linearGradient id="g93" x1="0" y1="0" x2="0" y2="1"><stop offset="0" stop-color="#fff4d4"/><stop offset="1" stop-color="#f6d38c"/></linearGradient></defs><path d="M1.500 21.500V3.500Q1.500 2 3 2H10L13 5H23.500Q25 5 25 6.500V9.500" fill="#f3c877" stroke="#b87a22" stroke-width="2" stroke-linejoin="round"/><path d="M4 4.200H9.500" stroke="#fff1cc" stroke-width="1.400"/><path d="M1.500 21.500L8 9.500H30L23.500 21.500Z" fill="url(#g93)" stroke="#b87a22" stroke-width="2" stroke-linejoin="round"/></g></svg><div class="t tr" style="left:238px;top:602.6px;line-height:34px;"><span class="l" style="letter-spacing:-0.307px;">bps</span></div><svg class="a" style="left:180px;top:645px;" width="13" height="18" viewBox="0 0 13 18"><path d="M2 1.500L9.500 9L2 16.500" fill="none" stroke="#a3a3a3" stroke-width="3.600"/></svg><svg class="a" style="left:203px;top:636px" width="32" height="32" viewBox="0 0 32 32"><g transform="translate(0.5,5.5)"><defs><linearGradient id="g94" x1="0" y1="0" x2="0" y2="1"><stop offset="0" stop-color="#fff4d4"/><stop offset="1" stop-color="#f6d38c"/></linearGradient></defs><path d="M1.500 21.500V3.500Q1.500 2 3 2H10L13 5H23.500Q25 5 25 6.500V9.500" fill="#f3c877" stroke="#b87a22" stroke-width="2" stroke-linejoin="round"/><path d="M4 4.200H9.500" stroke="#fff1cc" stroke-width="1.400"/><path d="M1.500 21.500L8 9.500H30L23.500 21.500Z" fill="url(#g94)" stroke="#b87a22" stroke-width="2" stroke-linejoin="round"/></g></svg><div class="t tr" style="left:238px;top:636.6px;line-height:34px;"><span class="l" style="letter-spacing:-0.641px;">eos</span></div><svg class="a" style="left:180px;top:679px;" width="13" height="18" viewBox="0 0 13 18"><path d="M2 1.500L9.500 9L2 16.500" fill="none" stroke="#a3a3a3" stroke-width="3.600"/></svg><svg class="a" style="left:203px;top:670px" width="32" height="32" viewBox="0 0 32 32"><g transform="translate(0.5,5.5)"><defs><linearGradient id="g95" x1="0" y1="0" x2="0" y2="1"><stop offset="0" stop-color="#fff4d4"/><stop offset="1" stop-color="#f6d38c"/></linearGradient></defs><path d="M1.500 21.500V3.500Q1.500 2 3 2H10L13 5H23.500Q25 5 25 6.500V9.500" fill="#f3c877" stroke="#b87a22" stroke-width="2" stroke-linejoin="round"/><path d="M4 4.200H9.500" stroke="#fff1cc" stroke-width="1.400"/><path d="M1.500 21.500L8 9.500H30L23.500 21.500Z" fill="url(#g95)" stroke="#b87a22" stroke-width="2" stroke-linejoin="round"/></g></svg><div class="t tr" style="left:238px;top:670.6px;line-height:34px;"><span class="l" style="letter-spacing:-0.395px;">user</span></div><svg class="a" style="left:203px;top:704px" width="32" height="32" viewBox="0 0 32 32"><defs><linearGradient id="g96" x1="0" y1="0" x2="0" y2="1"><stop offset="0" stop-color="#f8fafd"/><stop offset="1" stop-color="#e2e9f6"/></linearGradient></defs><path d="M6 3H20L27 10V30H6Z" fill="url(#g96)" stroke="#a3b0c8" stroke-width="1.800" stroke-linejoin="round"/><path d="M6 16V3H20L27 10V14" fill="none" stroke="#bcae80" stroke-width="1.800"/><path d="M20 3V10H27Z" fill="#f0dfa8" stroke="#c4b078" stroke-width="1"/><path d="M11 11H15.300V13H14.600L16.500 16.300L18.400 13H17.700V11H22V13H21L17.900 18L21 23H22V25H17.700V23H18.400L16.500 19.700L14.600 23H15.300V25H11V23H12L15.100 18L12 13H11Z" fill="#1f3f70"/></svg><div class="t tr" style="left:238px;top:704.6px;line-height:34px;"><span class="l">antisamy-eos.xml</span></div><svg class="a" style="left:203px;top:738px" width="32" height="32" viewBox="0 0 32 32"><defs><linearGradient id="g97" x1="0" y1="0" x2="0" y2="1"><stop offset="0" stop-color="#f8fafd"/><stop offset="1" stop-color="#e2e9f6"/></linearGradient></defs><path d="M6 3H20L27 10V30H6Z" fill="url(#g97)" stroke="#a3b0c8" stroke-width="1.800" stroke-linejoin="round"/><path d="M6 16V3H20L27 10V14" fill="none" stroke="#bcae80" stroke-width="1.800"/><path d="M20 3V10H27Z" fill="#f0dfa8" stroke="#c4b078" stroke-width="1"/><path d="M11 11H15.300V13H14.600L16.500 16.300L18.400 13H17.700V11H22V13H21L17.900 18L21 23H22V25H17.700V23H18.400L16.500 19.700L14.600 23H15.300V25H11V23H12L15.100 18L12 13H11Z" fill="#1f3f70"/><circle cx="5" cy="25" r="5" fill="#b4682a" stroke="#6a3a14" stroke-width="1"/><path d="M2 23L8 27M3 27L7 23" stroke="#f2c48a" stroke-width="1.2"/></svg><div class="t tr" style="left:238px;top:738.6px;line-height:34px;"><span class="l">spring-config.xml</span></div><svg class="a" style="left:203px;top:772px" width="32" height="32" viewBox="0 0 32 32"><defs><linearGradient id="g98" x1="0" y1="0" x2="0" y2="1"><stop offset="0" stop-color="#f8fafd"/><stop offset="1" stop-color="#e2e9f6"/></linearGradient></defs><path d="M6 3H20L27 10V30H6Z" fill="url(#g98)" stroke="#a3b0c8" stroke-width="1.800" stroke-linejoin="round"/><path d="M6 16V3H20L27 10V14" fill="none" stroke="#bcae80" stroke-width="1.800"/><path d="M20 3V10H27Z" fill="#f0dfa8" stroke="#c4b078" stroke-width="1"/><path d="M11 11H15.300V13H14.600L16.500 16.300L18.400 13H17.700V11H22V13H21L17.900 18L21 23H22V25H17.700V23H18.400L16.500 19.700L14.600 23H15.300V25H11V23H12L15.100 18L12 13H11Z" fill="#1f3f70"/></svg><div class="t tr" style="left:238px;top:772.6px;line-height:34px;"><span class="l">sys-config.xml</span></div><svg class="a" style="left:203px;top:806px" width="32" height="32" viewBox="0 0 32 32"><defs><linearGradient id="g99" x1="0" y1="0" x2="0" y2="1"><stop offset="0" stop-color="#f8fafd"/><stop offset="1" stop-color="#e2e9f6"/></linearGradient></defs><path d="M6 3H20L27 10V30H6Z" fill="url(#g99)" stroke="#a3b0c8" stroke-width="1.800" stroke-linejoin="round"/><path d="M6 16V3H20L27 10V14" fill="none" stroke="#bcae80" stroke-width="1.800"/><path d="M20 3V10H27Z" fill="#f0dfa8" stroke="#c4b078" stroke-width="1"/><path d="M11 11H15.300V13H14.600L16.500 16.300L18.400 13H17.700V11H22V13H21L17.900 18L21 23H22V25H17.700V23H18.400L16.500 19.700L14.600 23H15.300V25H11V23H12L15.100 18L12 13H11Z" fill="#1f3f70"/></svg><div class="t tr" style="left:238px;top:806.6px;line-height:34px;"><span class="l">user-config.xml</span></div><svg class="a" style="left:203px;top:840px" width="32" height="32" viewBox="0 0 32 32"><defs><linearGradient id="g100" x1="0" y1="0" x2="0" y2="1"><stop offset="0" stop-color="#f8fafd"/><stop offset="1" stop-color="#e2e9f6"/></linearGradient></defs><path d="M6 3H20L27 10V30H6Z" fill="url(#g100)" stroke="#a3b0c8" stroke-width="1.800" stroke-linejoin="round"/><path d="M6 16V3H20L27 10V14" fill="none" stroke="#bcae80" stroke-width="1.800"/><path d="M20 3V10H27Z" fill="#f0dfa8" stroke="#c4b078" stroke-width="1"/><path d="M11 11H15.300V13H14.600L16.500 16.300L18.400 13H17.700V11H22V13H21L17.900 18L21 23H22V25H17.700V23H18.400L16.500 19.700L14.600 23H15.300V25H11V23H12L15.100 18L12 13H11Z" fill="#1f3f70"/></svg><div class="t tr" style="left:238px;top:840.6px;line-height:34px;"><span class="l">user-filter.xml</span></div><svg class="a" style="left:203px;top:874px" width="32" height="32" viewBox="0 0 32 32"><defs><linearGradient id="g101" x1="0" y1="0" x2="0" y2="1"><stop offset="0" stop-color="#f8fafd"/><stop offset="1" stop-color="#e2e9f6"/></linearGradient></defs><path d="M6 3H20L27 10V30H6Z" fill="url(#g101)" stroke="#a3b0c8" stroke-width="1.800" stroke-linejoin="round"/><path d="M6 16V3H20L27 10V14" fill="none" stroke="#bcae80" stroke-width="1.800"/><path d="M20 3V10H27Z" fill="#f0dfa8" stroke="#c4b078" stroke-width="1"/><path d="M11 11H15.300V13H14.600L16.500 16.300L18.400 13H17.700V11H22V13H21L17.900 18L21 23H22V25H17.700V23H18.400L16.500 19.700L14.600 23H15.300V25H11V23H12L15.100 18L12 13H11Z" fill="#1f3f70"/></svg><div class="t tr" style="left:238px;top:874.6px;line-height:34px;"><span class="l">wfengine-config.xml</span></div><svg class="a" style="left:203px;top:908px" width="32" height="32" viewBox="0 0 32 32"><defs><linearGradient id="g102" x1="0" y1="0" x2="0" y2="1"><stop offset="0" stop-color="#f8fafd"/><stop offset="1" stop-color="#e2e9f6"/></linearGradient></defs><path d="M6 3H20L27 10V30H6Z" fill="url(#g102)" stroke="#a3b0c8" stroke-width="1.800" stroke-linejoin="round"/><path d="M6 16V3H20L27 10V14" fill="none" stroke="#bcae80" stroke-width="1.800"/><path d="M20 3V10H27Z" fill="#f0dfa8" stroke="#c4b078" stroke-width="1"/><path d="M11 11H15.300V13H14.600L16.500 16.300L18.400 13H17.700V11H22V13H21L17.900 18L21 23H22V25H17.700V23H18.400L16.500 19.700L14.600 23H15.300V25H11V23H12L15.100 18L12 13H11Z" fill="#1f3f70"/></svg><div class="t tr" style="left:238px;top:908.6px;line-height:34px;"><span class="l">wfsys-config.xml</span></div><svg class="a" style="left:171px;top:942px" width="32" height="32" viewBox="0 0 32 32"><defs><linearGradient id="g103" x1="0" y1="0" x2="0" y2="1"><stop offset="0" stop-color="#f8fafd"/><stop offset="1" stop-color="#e2e9f6"/></linearGradient></defs><path d="M6 3H20L27 10V30H6Z" fill="url(#g103)" stroke="#a3b0c8" stroke-width="1.800" stroke-linejoin="round"/><path d="M6 16V3H20L27 10V14" fill="none" stroke="#bcae80" stroke-width="1.800"/><path d="M20 3V10H27Z" fill="#f0dfa8" stroke="#c4b078" stroke-width="1"/><path d="M11 11H15.300V13H14.600L16.500 16.300L18.400 13H17.700V11H22V13H21L17.900 18L21 23H22V25H17.700V23H18.400L16.500 19.700L14.600 23H15.300V25H11V23H12L15.100 18L12 13H11Z" fill="#1f3f70"/></svg><div class="t tr" style="left:206px;top:942.6px;line-height:34px;"><span class="l">primeton-config.xml</span></div><svg class="a" style="left:116px;top:985px;" width="13" height="18" viewBox="0 0 13 18"><path d="M2 1.500L9.500 9L2 16.500" fill="none" stroke="#a3a3a3" stroke-width="3.600"/></svg><svg class="a" style="left:139px;top:976px" width="32" height="32" viewBox="0 0 32 32"><g transform="translate(0.5,5.5)"><defs><linearGradient id="g104" x1="0" y1="0" x2="0" y2="1"><stop offset="0" stop-color="#fff4d4"/><stop offset="1" stop-color="#f6d38c"/></linearGradient></defs><path d="M1.500 21.500V3.500Q1.500 2 3 2H10L13 5H23.500Q25 5 25 6.500V9.500" fill="#f3c877" stroke="#b87a22" stroke-width="2" stroke-linejoin="round"/><path d="M4 4.200H9.500" stroke="#fff1cc" stroke-width="1.400"/><path d="M1.500 21.500L8 9.500H30L23.500 21.500Z" fill="url(#g104)" stroke="#b87a22" stroke-width="2" stroke-linejoin="round"/></g></svg><div class="t tr" style="left:174px;top:976.6px;line-height:34px;"><span class="l" style="font-size:25.92px;letter-spacing:-0.684px;">assembly</span></div><svg class="a" style="left:116px;top:1019px;" width="13" height="18" viewBox="0 0 13 18"><path d="M2 1.500L9.500 9L2 16.500" fill="none" stroke="#a3a3a3" stroke-width="3.600"/></svg><svg class="a" style="left:139px;top:1010px" width="32" height="32" viewBox="0 0 32 32"><g transform="translate(0.5,5.5)"><defs><linearGradient id="g105" x1="0" y1="0" x2="0" y2="1"><stop offset="0" stop-color="#fff4d4"/><stop offset="1" stop-color="#f6d38c"/></linearGradient></defs><path d="M1.500 21.500V3.500Q1.500 2 3 2H10L13 5H23.500Q25 5 25 6.500V9.500" fill="#f3c877" stroke="#b87a22" stroke-width="2" stroke-linejoin="round"/><path d="M4 4.200H9.500" stroke="#fff1cc" stroke-width="1.400"/><path d="M1.500 21.500L8 9.500H30L23.500 21.500Z" fill="url(#g105)" stroke="#b87a22" stroke-width="2" stroke-linejoin="round"/></g></svg><div class="t tr" style="left:174px;top:1010.6px;line-height:34px;"><span class="l" style="letter-spacing:-0.462px;">resources</span></div><svg class="a" style="left:116px;top:1053px;" width="13" height="18" viewBox="0 0 13 18"><path d="M2 1.500L9.500 9L2 16.500" fill="none" stroke="#a3a3a3" stroke-width="3.600"/></svg><svg class="a" style="left:139px;top:1044px" width="32" height="32" viewBox="0 0 32 32"><g transform="translate(0.5,5.5)"><defs><linearGradient id="g106" x1="0" y1="0" x2="0" y2="1"><stop offset="0" stop-color="#fff4d4"/><stop offset="1" stop-color="#f6d38c"/></linearGradient></defs><path d="M1.500 21.500V3.500Q1.500 2 3 2H10L13 5H23.500Q25 5 25 6.500V9.500" fill="#f3c877" stroke="#b87a22" stroke-width="2" stroke-linejoin="round"/><path d="M4 4.200H9.500" stroke="#fff1cc" stroke-width="1.400"/><path d="M1.500 21.500L8 9.500H30L23.500 21.500Z" fill="url(#g106)" stroke="#b87a22" stroke-width="2" stroke-linejoin="round"/></g></svg><div class="t tr" style="left:174px;top:1044.6px;line-height:34px;"><span class="l" style="letter-spacing:-0.304px;">scripts</span></div></div></div>
<div class="a" style="left:582px;top:134px;width:960px;height:1140px;background:#fff;border:1px solid #d4d9e6;border-radius:11px 0 0 0;box-sizing:border-box;"></div><div class="a" style="left:583px;top:135px;width:951px;height:50px;background:#f4f5fb;border-radius:10px 0 0 0;"></div><div class="a" style="left:583px;top:136px;width:276px;height:49px;background:linear-gradient(#d2dce8 0%,#e8edf4 45%,#fbfcfd 85%,#fff 100%);border-radius:10px 12px 0 0;"></div><svg class="a" style="left:594px;top:146px" width="32" height="32" viewBox="0 0 32 32"><defs><linearGradient id="g107" x1="0" y1="0" x2="0" y2="1"><stop offset="0" stop-color="#f8fafd"/><stop offset="1" stop-color="#e2e9f6"/></linearGradient></defs><path d="M6 3H20L27 10V30H6Z" fill="url(#g107)" stroke="#a3b0c8" stroke-width="1.800" stroke-linejoin="round"/><path d="M6 16V3H20L27 10V14" fill="none" stroke="#bcae80" stroke-width="1.800"/><path d="M20 3V10H27Z" fill="#f0dfa8" stroke="#c4b078" stroke-width="1"/><path d="M11 11H15.300V13H14.600L16.500 16.300L18.400 13H17.700V11H22V13H21L17.900 18L21 23H22V25H17.700V23H18.400L16.500 19.700L14.600 23H15.300V25H11V23H12L15.100 18L12 13H11Z" fill="#1f3f70"/></svg><div class="t " style="left:632px;top:146.6px;line-height:34px;"><span class="l" style="letter-spacing:-0.085px;">user-config.xml</span></div><svg class="a" style="left:824px;top:151px;" width="20" height="20" viewBox="0 0 20 20"><path d="M0.700 0.700H5L10 5.500L15 0.700H19.300V5L14.500 10L19.300 15V19.300H15L10 14.500L5 19.300H0.700V15L5.500 10L0.700 5Z" fill="#fff" stroke="#6b6b6b" stroke-width="1.300" stroke-linejoin="miter"/></svg><div class="a" style="left:583px;top:185px;width:951px;height:930px;background:#fff;"></div><div class="a" style="left:588px;top:190px;width:24px;height:930px;background:#f6f6f6;"></div><div class="a" style="left:647px;top:190px;width:1px;height:930px;background:#f0f0f0;"></div><div class="a" style="left:588px;top:294px;width:24px;height:67px;background:#1e7fd6 repeating-conic-gradient(#cfe6fa 0% 25%, #1e7fd6 0% 50%) 0 0/4px 4px;"></div><div class="a" style="left:652px;top:328px;width:882px;height:33px;background:#e8f2fe;"></div><svg class="a" style="left:628px;top:266px;" width="18" height="18" viewBox="0 0 18 18"><circle cx="9" cy="9" r="7.5" fill="#f4f7fc" stroke="#93a5c4" stroke-width="1.6"/><path d="M4.5 9H13.5" stroke="#6a7fa6" stroke-width="2"/></svg><div class="a" style="left:583px;top:185px;width:951px;height:930px;overflow:hidden"><div class="a" style="left:-583px;top:-185px"><div class="c" style="left:773px;top:194px"><span class="cm">&lt;/group&gt;</span></div><div class="c" style="left:773px;top:228px"><span class="cm">--&gt;</span></div><div class="c" style="left:773px;top:262px"><span class="tg">&lt;group </span><span class="at">name</span><span class="tx">=</span><span class="st">"default"</span><span class="tg">&gt;</span></div><div class="c" style="left:833px;top:296px"><span class="tg">&lt;configValue </span><span class="at">key</span><span class="tx">=</span><span class="st">"Database-Type"</span><span class="tg">&gt;</span><span class="tx">MySql</span><span class="tg">&lt;/configValue&gt;</span></div><div class="c" style="left:833px;top:330px"><span class="tg">&lt;configValue </span><span class="at">key</span><span class="tx">=</span><span class="st">"Jdbc-Type"</span><span class="tg">/&gt;</span></div><div class="c" style="left:833px;top:364px"><span class="tg">&lt;configValue </span><span class="at">key</span><span class="tx">=</span><span class="st">"C3p0-DriverClass"</span><span class="tg">&gt;</span><span class="tx">com.mysql.jdbc.Driver</span><span class="tg">&lt;/configValue&gt;</span></div><div class="c" style="left:833px;top:398px"><span class="tg">&lt;configValue </span><span class="at">key</span><span class="tx">=</span><span class="st">"C3p0-Url"</span><span class="tg">&gt;</span><span class="tx">jdbc:mysql://10.211.55.3:3306/eos</span><span class="tg">&lt;/configValue&gt;</span></div><div class="c" style="left:833px;top:432px"><span class="tg">&lt;configValue </span><span class="at">key</span><span class="tx">=</span><span class="st">"C3p0-UserName"</span><span class="tg">&gt;</span><span class="tx">root</span><span class="tg">&lt;/configValue&gt;</span></div><div class="c" style="left:833px;top:466px"><span class="tg">&lt;configValue </span><span class="at">key</span><span class="tx">=</span><span class="st">"C3p0-Password"</span><span class="tg">&gt;</span><span class="tx">primeton</span><span class="tg">&lt;/configValue&gt;</span></div><div class="c" style="left:833px;top:500px"><span class="tg">&lt;configValue </span><span class="at">key</span><span class="tx">=</span><span class="st">"C3p0-PoolSize"</span><span class="tg">&gt;</span><span class="tx">10</span><span class="tg">&lt;/configValue&gt;</span></div><div class="c" style="left:833px;top:534px"><span class="tg">&lt;configValue </span><span class="at">key</span><span class="tx">=</span><span class="st">"C3p0-MaxPoolSize"</span><span class="tg">&gt;</span><span class="tx">50</span><span class="tg">&lt;/configValue&gt;</span></div><div class="c" style="left:833px;top:568px"><span class="tg">&lt;configValue </span><span class="at">key</span><span class="tx">=</span><span class="st">"C3p0-MinPoolSize"</span><span class="tg">&gt;</span><span class="tx">10</span><span class="tg">&lt;/configValue&gt;</span></div><div class="c" style="left:833px;top:602px"><span class="cm">&lt;!-- //seconds, 0 means connections never expire --&gt;</span></div><div class="c" style="left:833px;top:636px"><span class="tg">&lt;configValue </span><span class="at">key</span><span class="tx">=</span><span class="st">"C3p0-MaxIdleTime"</span><span class="tg">&gt;</span><span class="tx">600</span><span class="tg">&lt;/configValue&gt;</span></div><div class="c" style="left:833px;top:670px"><span class="cm">&lt;!-- //idle connections never tested --&gt;</span></div><div class="c" style="left:833px;top:704px"><span class="tg">&lt;configValue </span><span class="at">key</span><span class="tx">=</span><span class="st">"C3p0-IdleConnectionTestPeriod"</span><span class="tg">&gt;</span><span class="tx">900</span><span class="tg">&lt;/configValue&gt;</span></div><div class="c" style="left:833px;top:738px"><span class="tg">&lt;configValue </span><span class="at">key</span><span class="tx">=</span><span class="st">"C3p0-MaxStatements"</span><span class="tg">&gt;</span><span class="tx">0</span><span class="tg">&lt;/configValue&gt;</span></div><div class="c" style="left:833px;top:772px"><span class="tg">&lt;configValue </span><span class="at">key</span><span class="tx">=</span><span class="st">"C3p0-NumHelperThreads"</span><span class="tg">&gt;</span><span class="tx">1</span><span class="tg">&lt;/configValue&gt;</span></div><div class="c" style="left:833px;top:840px"><span class="tg">&lt;configValue </span><span class="at">key</span><span class="tx">=</span><span class="st">"Transaction-Isolation"</span><span class="tg">&gt;</span><span class="tx">ISOLATION_DEFAULT</span><span class="tg">&lt;/configValue&gt;</span></div><div class="c" style="left:833px;top:874px"><span class="tg">&lt;configValue </span><span class="at">key</span><span class="tx">=</span><span class="st">"Test-Connect-Sql"</span><span class="tg">&gt;</span><span class="tx">SELECT count(*) from EOS_UNIQUE_TABLE</span><span class="tg">&lt;/configValue&gt;</span></div><div class="c" style="left:833px;top:908px"><span class="tg">&lt;configValue </span><span class="at">key</span><span class="tx">=</span><span class="st">"Retry-Connect-Count"</span><span class="tg">&gt;</span><span class="tx">-1</span><span class="tg">&lt;/configValue&gt;</span></div><div class="c" style="left:803px;top:1010px"><span class="cm">&lt;!-- Default Mail configuration --&gt;</span></div><div class="c" style="left:713px;top:1044px"><span class="tg">&lt;module </span><span class="at">name</span><span class="tx">=</span><span class="st">"Email"</span><span class="tg">&gt;</span></div><div class="c" style="left:773px;top:1078px"><span class="tg">&lt;group </span><span class="at">name</span><span class="tx">=</span><span class="st">"Default"</span><span class="tg">&gt;</span></div><svg class="a" style="left:1327px;top:491px;" width="122" height="5" viewBox="0 0 122 5"><path d="M0 3 L1 1 L3 4 L5 1 L7 4 L9 1 L11 4 L13 1 L15 4 L17 1 L19 4 L21 1 L23 4 L25 1 L27 4 L29 1 L31 4 L33 1 L35 4 L37 1 L39 4 L41 1 L43 4 L45 1 L47 4 L49 1 L51 4 L53 1 L55 4 L57 1 L59 4 L61 1 L63 4 L65 1 L67 4 L69 1 L71 4 L73 1 L75 4 L77 1 L79 4 L81 1 L83 4 L85 1 L87 4 L89 1 L91 4 L93 1 L95 4 L97 1 L99 4 L101 1 L103 4 L105 1 L107 4 L109 1 L111 4 L113 1 L115 4 L117 1 L119 4 L121 1" fill="none" stroke="#e8632a" stroke-width="1"/></svg></div></div><div class="a" style="left:583px;top:1115px;width:951px;height:33px;background:#cdcdcd;"></div><div class="a" style="left:583px;top:1148px;width:951px;height:1px;background:#9a9a9a;"></div><div class="a" style="left:583px;top:1149px;width:951px;height:41px;background:#f5f6fb;"></div><div class="a" style="left:583px;top:1190px;width:951px;height:6px;background:#fff;"></div><div class="a" style="left:583px;top:1196px;width:951px;height:8px;background:#dfe4f5;"></div><div class="a" style="left:583px;top:1204px;width:951px;height:52px;background:#f5f6fb;"></div><div class="a" style="left:583px;top:1256px;width:951px;height:4px;background:#fff;"></div>
<div class="a" style="left:0px;top:1083px;width:574px;height:435px;background:#fff;border-radius:11px 11px 0 0;"></div><div class="a" style="left:0px;top:1083px;width:292px;height:51px;background:linear-gradient(#dde5f0,#fff);border-radius:11px 12px 0 0;"></div><svg class="a" style="left:10px;top:1093px" width="33" height="33" viewBox="0 0 33 33"><path d="M1 6L8 2L16 6L24 2V27L16 31L8 27L1 31Z" fill="#8ad23a" stroke="#6a7a2a" stroke-width="1.6" stroke-linejoin="round"/><path d="M8 2V27M16 6V31" stroke="#5a8a2a" stroke-width="1.4"/><path d="M3 14Q8 10 12 16T22 14" fill="none" stroke="#2f8ac4" stroke-width="3"/><path d="M4 22L10 20L14 24" fill="none" stroke="#c4e84a" stroke-width="2"/><rect x="21" y="11" width="11" height="20" fill="#e6e6dc" stroke="#7a7a5a" stroke-width="1.6"/><path d="M23 16H30M23 20H30M23 24H30M23 28H30" stroke="#7a7a6a" stroke-width="1.4"/><rect x="27" y="13" width="2.500" height="2" fill="#e02020"/></svg><div class="t " style="left:49px;top:1094.6px;line-height:34px;">数据源资源管理器</div><svg class="a" style="left:256px;top:1099px;" width="20" height="20" viewBox="0 0 20 20"><path d="M0.700 0.700H5L10 5.500L15 0.700H19.300V5L14.500 10L19.300 15V19.300H15L10 14.500L5 19.300H0.700V15L5.500 10L0.700 5Z" fill="#fff" stroke="#6b6b6b" stroke-width="1.300" stroke-linejoin="miter"/></svg><svg class="a" style="left:213px;top:1145px" width="26" height="26" viewBox="0 0 26 26"><rect x="1" y="1" width="19" height="19" fill="#dfe7f3" stroke="#a3b1cc" stroke-width="2"/><rect x="6" y="6" width="19" height="19" fill="#f4f8fd" stroke="#8d9dbd" stroke-width="2"/><path d="M10 15.5H21" stroke="#1f3f8f" stroke-width="2.4"/></svg><svg class="a" style="left:248px;top:1141px" width="31" height="31" viewBox="0 0 31 31"><path d="M11 1.5L1.5 9L11 16.5V12H24V6H11Z" fill="#fdf3c8" stroke="#c4861a" stroke-width="2" stroke-linejoin="round"/><path d="M20 14.5L29.5 22L20 29.5V25H7V19H20Z" fill="#fdf3c8" stroke="#c4861a" stroke-width="2" stroke-linejoin="round"/></svg><div class="a" style="left:286px;top:1140px;width:1px;height:35px;background:#9a9a9a;"></div><svg class="a" style="left:16px;top:1188px;" width="18" height="13" viewBox="0 0 18 13"><path d="M1.800 2.200L9 9.600L16.200 2.200" fill="none" stroke="#3f3f3f" stroke-width="3.600"/></svg><svg class="a" style="left:43px;top:1176px" width="32" height="32" viewBox="0 0 32 32"><g transform="translate(0.5,5.5)"><defs><linearGradient id="g108" x1="0" y1="0" x2="0" y2="1"><stop offset="0" stop-color="#fff4d4"/><stop offset="1" stop-color="#f6d38c"/></linearGradient></defs><path d="M1.500 21.500V3.500Q1.500 2 3 2H10L13 5H23.500Q25 5 25 6.500V9.500" fill="#f3c877" stroke="#b87a22" stroke-width="2" stroke-linejoin="round"/><path d="M4 4.200H9.500" stroke="#fff1cc" stroke-width="1.400"/><path d="M1.500 21.500L8 9.500H30L23.500 21.500Z" fill="url(#g108)" stroke="#b87a22" stroke-width="2" stroke-linejoin="round"/></g></svg><div class="t tr" style="left:78px;top:1176.6px;line-height:34px;"><span class="l" style="letter-spacing:-0.035px;">ODA </span>数据源</div><svg class="a" style="left:75px;top:1210px" width="32" height="32" viewBox="0 0 32 32"><g transform="translate(0.5,5.5)"><defs><linearGradient id="g109" x1="0" y1="0" x2="0" y2="1"><stop offset="0" stop-color="#fff4d4"/><stop offset="1" stop-color="#f6d38c"/></linearGradient></defs><path d="M1.500 21.500V3.500Q1.500 2 3 2H10L13 5H23.500Q25 5 25 6.500V9.500" fill="#f3c877" stroke="#b87a22" stroke-width="2" stroke-linejoin="round"/><path d="M4 4.200H9.500" stroke="#fff1cc" stroke-width="1.400"/><path d="M1.500 21.500L8 9.500H30L23.500 21.500Z" fill="url(#g109)" stroke="#b87a22" stroke-width="2" stroke-linejoin="round"/></g></svg><div class="t tr" style="left:110px;top:1210.6px;line-height:34px;"><span class="l" style="font-size:25.87px;letter-spacing:-0.640px;">Web Services </span>数据源</div><svg class="a" style="left:75px;top:1244px" width="32" height="32" viewBox="0 0 32 32"><g transform="translate(0.5,5.5)"><defs><linearGradient id="g110" x1="0" y1="0" x2="0" y2="1"><stop offset="0" stop-color="#fff4d4"/><stop offset="1" stop-color="#f6d38c"/></linearGradient></defs><path d="M1.500 21.500V3.500Q1.500 2 3 2H10L13 5H23.500Q25 5 25 6.500V9.500" fill="#f3c877" stroke="#b87a22" stroke-width="2" stroke-linejoin="round"/><path d="M4 4.200H9.500" stroke="#fff1cc" stroke-width="1.400"/><path d="M1.500 21.500L8 9.500H30L23.500 21.500Z" fill="url(#g110)" stroke="#b87a22" stroke-width="2" stroke-linejoin="round"/></g></svg><div class="t tr" style="left:110px;top:1244.6px;line-height:34px;"><span class="l" style="letter-spacing:-0.680px;">XML </span>数据源</div><svg class="a" style="left:75px;top:1278px" width="32" height="32" viewBox="0 0 32 32"><g transform="translate(0.5,5.5)"><defs><linearGradient id="g111" x1="0" y1="0" x2="0" y2="1"><stop offset="0" stop-color="#fff4d4"/><stop offset="1" stop-color="#f6d38c"/></linearGradient></defs><path d="M1.500 21.500V3.500Q1.500 2 3 2H10L13 5H23.500Q25 5 25 6.500V9.500" fill="#f3c877" stroke="#b87a22" stroke-width="2" stroke-linejoin="round"/><path d="M4 4.200H9.500" stroke="#fff1cc" stroke-width="1.400"/><path d="M1.500 21.500L8 9.500H30L23.500 21.500Z" fill="url(#g111)" stroke="#b87a22" stroke-width="2" stroke-linejoin="round"/></g></svg><div class="t tr" style="left:110px;top:1278.6px;line-height:34px;">平面文件数据源</div><svg class="a" style="left:43px;top:1312px" width="32" height="32" viewBox="0 0 32 32"><g transform="translate(0.5,5.5)"><defs><linearGradient id="g112" x1="0" y1="0" x2="0" y2="1"><stop offset="0" stop-color="#fff4d4"/><stop offset="1" stop-color="#f6d38c"/></linearGradient></defs><path d="M1.500 21.500V3.500Q1.500 2 3 2H10L13 5H23.500Q25 5 25 6.500V9.500" fill="#f3c877" stroke="#b87a22" stroke-width="2" stroke-linejoin="round"/><path d="M4 4.200H9.500" stroke="#fff1cc" stroke-width="1.400"/><path d="M1.500 21.500L8 9.500H30L23.500 21.500Z" fill="url(#g112)" stroke="#b87a22" stroke-width="2" stroke-linejoin="round"/></g></svg><div class="t tr" style="left:78px;top:1312.6px;line-height:34px;">数据库连接</div>
<div class="a" style="left:588px;top:1260px;width:946px;height:258px;background:#f0f0f0;"></div><div class="a" style="left:574px;top:1260px;width:8px;height:258px;background:#dfe4f5;"></div><div class="a" style="left:582px;top:1260px;width:6px;height:258px;background:#fff;"></div>
<div class="a" style="left:292px;top:424px;width:622px;height:1043px;background:#f2f2f2;border:1px solid #ccc;box-sizing:border-box;box-shadow:4px 4px 4px rgba(0,0,0,.45);"></div><div class="t m" style="left:343px;top:430.1px;line-height:34px;color:#000;">创建</div><svg class="a" style="left:890px;top:438px;" width="10" height="16" viewBox="0 0 10 16"><path d="M1.5 1.5L8 8L1.5 14.5" fill="none" stroke="#222" stroke-width="1.5"/></svg><svg class="a" style="left:299px;top:469px" width="31" height="30" viewBox="0 0 31 30"><path d="M2 17Q2 6 13 7V2L22 10L13 17V12Q7 11 6 18Z" fill="#f7d05a" stroke="#c4901a" stroke-width="1.5" stroke-linejoin="round"/><path d="M29 13Q29 24 18 23V28L9 20L18 13V18Q24 19 25 12Z" fill="#f7d05a" stroke="#c4901a" stroke-width="1.5" stroke-linejoin="round"/></svg><div class="t m" style="left:343px;top:468.1px;line-height:34px;color:#000;">刷新<span class="l" style="font-size:23.90px;letter-spacing:-0.509px;">(F)</span></div><div class="t m" style="left:858px;top:468.1px;line-height:34px;color:#000;"><span class="l" style="font-size:23.50px;letter-spacing:-0.713px;">F5</span></div><div class="a" style="left:339px;top:506px;width:571px;height:1px;background:#d7d7d7;"></div><div class="t m" style="left:343px;top:513.1px;line-height:34px;color:#000;">打开<span class="l" style="letter-spacing:-0.516px;">(O)</span></div><div class="t m" style="left:343px;top:551.1px;line-height:34px;color:#000;">打开方式</div><svg class="a" style="left:890px;top:559px;" width="10" height="16" viewBox="0 0 10 16"><path d="M1.5 1.5L8 8L1.5 14.5" fill="none" stroke="#222" stroke-width="1.5"/></svg><div class="a" style="left:339px;top:589px;width:571px;height:1px;background:#d7d7d7;"></div><svg class="a" style="left:300px;top:597px" width="30" height="31" viewBox="0 0 30 31"><g transform="translate(1,1)"><path d="M0 0H13L18 5V22H0Z" fill="#fff" stroke="#9aa6bd" stroke-width="1.5"/><path d="M13 0V5H18" fill="#e8e2c8" stroke="#b8a878" stroke-width="1"/><path d="M3 6H12M3 9.500H15M3 13H15M3 16.500H15" stroke="#5a7ab8" stroke-width="1.4"/></g><g transform="translate(10,8)"><path d="M0 0H13L18 5V22H0Z" fill="#fff" stroke="#9aa6bd" stroke-width="1.5"/><path d="M13 0V5H18" fill="#e8e2c8" stroke="#b8a878" stroke-width="1"/><path d="M3 6H12M3 9.500H15M3 13H15M3 16.500H15" stroke="#5a7ab8" stroke-width="1.4"/></g></svg><div class="t m" style="left:343px;top:596.1px;line-height:34px;color:#000;">复制</div><div class="t m" style="left:810px;top:596.1px;line-height:34px;color:#000;"><span class="l" style="letter-spacing:-0.068px;">Ctrl+C</span></div><svg class="a" style="left:300px;top:635px" width="31" height="31" viewBox="0 0 31 31"><g transform="translate(1,1)"><path d="M0 0H13L18 5V22H0Z" fill="#fff" stroke="#9aa6bd" stroke-width="1.5"/><path d="M13 0V5H18" fill="#e8e2c8" stroke="#b8a878" stroke-width="1"/><path d="M3 6H12M3 9.500H15M3 13H15M3 16.500H15" stroke="#5a7ab8" stroke-width="1.4"/></g><g transform="translate(10,9)"><path d="M0 0H14L19 5V21H0Z" fill="#fff" stroke="#9aa6bd" stroke-width="1.5"/><path d="M14 0V5H19" fill="#e8e2c8" stroke="#b8a878" stroke-width="1"/></g><rect x="4" y="12" width="22" height="6" fill="#7f9fd0" stroke="#3f5f9a" stroke-width="1"/><rect x="13" y="21" width="13" height="5" fill="#cfd8ea" stroke="#8a9ab8" stroke-width="1"/></svg><div class="t m" style="left:343px;top:634.1px;line-height:34px;color:#000;">复制全名</div><svg class="a" style="left:301px;top:673px" width="29" height="31" viewBox="0 0 29 31"><rect x="1.500" y="4" width="22" height="25" rx="2" fill="#e8c07a" stroke="#a87a2a" stroke-width="1.800"/><path d="M7 5V2.500Q7 1 9 1H16Q18 1 18 2.500V5Z" fill="#8a9ab8" stroke="#5a6a8a" stroke-width="1.200"/><path d="M11 11H22L27 16V30H11Z" fill="#fff" stroke="#9aa6bd" stroke-width="1.500"/><path d="M14 17H21M14 20.500H24M14 24H24M14 27H24" stroke="#5a7ab8" stroke-width="1.300"/></svg><div class="t m" style="left:343px;top:672.1px;line-height:34px;color:#000;">粘贴</div><div class="t m" style="left:810px;top:672.1px;line-height:34px;color:#000;"><span class="l" style="letter-spacing:0.172px;">Ctrl+V</span></div><svg class="a" style="left:301px;top:712px" width="28" height="27" viewBox="0 0 28 27"><defs><linearGradient id="g113" x1="0" y1="0" x2="0" y2="1"><stop offset="0" stop-color="#f58282"/><stop offset="1" stop-color="#d92a2a"/></linearGradient></defs><path d="M5.500 5.500L22.500 21.500M22.500 5.500L5.500 21.500" stroke="#cf2020" stroke-width="9" stroke-linecap="round"/><path d="M5.500 5.500L22.500 21.500M22.500 5.500L5.500 21.500" stroke="url(#g113)" stroke-width="7" stroke-linecap="round"/><path d="M5.500 5.500L22.500 21.500M22.500 5.500L5.500 21.500" stroke="#e84a4a" stroke-width="3" stroke-linecap="round" opacity=".5"/></svg><div class="t m" style="left:343px;top:710.1px;line-height:34px;color:#000;">删除</div><div class="t m" style="left:836px;top:710.1px;line-height:34px;color:#000;">删除</div><div class="a" style="left:339px;top:748px;width:571px;height:1px;background:#d7d7d7;"></div><svg class="a" style="left:299px;top:755px" width="30" height="31" viewBox="0 0 30 31"><rect x="6.500" y="1.500" width="17" height="28" rx="1" fill="#c6e6fa" stroke="#1a9fdc" stroke-width="2.600"/><path d="M1 6H5.500M1 10.500H5.500M1 15H5.500M1 19.500H5.500M1 24H5.500M24.500 6H29M24.500 10.500H29M24.500 15H29M24.500 19.500H29M24.500 24H29" stroke="#1a9fdc" stroke-width="2"/></svg><div class="t m" style="left:343px;top:755.1px;line-height:34px;color:#000;">维护运算逻辑</div><div class="t m" style="left:343px;top:793.1px;line-height:34px;color:#000;">重构</div><svg class="a" style="left:890px;top:801px;" width="10" height="16" viewBox="0 0 10 16"><path d="M1.5 1.5L8 8L1.5 14.5" fill="none" stroke="#222" stroke-width="1.5"/></svg><div class="a" style="left:339px;top:831px;width:571px;height:1px;background:#d7d7d7;"></div><div class="t m" style="left:343px;top:838.1px;line-height:34px;color:#000;">封装成<span class="l" style="letter-spacing:-0.447px;">Web Service</span></div><div class="t m" style="left:343px;top:876.1px;line-height:34px;color:#000;">生成<span class="l" style="font-size:25.14px;letter-spacing:-0.908px;">WSDL</span>文件</div><svg class="a" style="left:302px;top:919px" width="28" height="21" viewBox="0 0 28 21"><path d="M8 1H14V5L20 8L14 10L10 14L4 10Z" fill="#d6d6d6" stroke="#c4c4c4" stroke-width="1"/><path d="M2 18H12M14 18H26" stroke="#cfcfcf" stroke-width="2.400"/><path d="M10 6L16 12" stroke="#bdbdbd" stroke-width="2"/></svg><div class="t m" style="left:343px;top:914.1px;line-height:34px;color:#6d6d6d;">从上下文移除</div><div class="t m" style="left:658px;top:914.1px;line-height:34px;color:#6d6d6d;"><span class="l" style="letter-spacing:0.643px;">Ctrl+Alt+Shift+</span>向下</div><div class="a" style="left:339px;top:952px;width:571px;height:1px;background:#d7d7d7;"></div><svg class="a" style="left:298px;top:961px" width="31" height="28" viewBox="0 0 31 28"><path d="M1.500 15V26.500H29.500V15H23V20H8V15Z" fill="#dfe8f6" stroke="#6f8fc4" stroke-width="2.200" stroke-linejoin="round"/><path d="M6 2L18 14" stroke="#6f8fc4" stroke-width="2.200"/><path d="M20.500 6.500V16.500H10.500Z" fill="#6f8fc4"/></svg><div class="t m" style="left:343px;top:959.1px;line-height:34px;color:#000;">导入<span class="l" style="font-size:24.28px;letter-spacing:-0.360px;">(I)...</span></div><svg class="a" style="left:298px;top:999px" width="31" height="28" viewBox="0 0 31 28"><path d="M1.500 15V26.500H29.500V15H23V20H8V15Z" fill="#dfe8f6" stroke="#6f8fc4" stroke-width="2.200" stroke-linejoin="round"/><path d="M9 17L23 3" stroke="#6f8fc4" stroke-width="2.200"/><path d="M15 1.500H25V11.500Z" fill="#6f8fc4"/></svg><div class="t m" style="left:343px;top:997.1px;line-height:34px;color:#000;">导出<span class="l" style="font-size:24.96px;letter-spacing:-0.474px;">(O)...</span></div><div class="a" style="left:339px;top:1035px;width:571px;height:1px;background:#d7d7d7;"></div><svg class="a" style="left:298px;top:1041px" width="31" height="29" viewBox="0 0 31 29"><defs><linearGradient id="g114" x1="0" y1="0" x2="0" y2="1"><stop offset="0" stop-color="#5cbf5c"/><stop offset="1" stop-color="#1d8a2d"/></linearGradient></defs><circle cx="12" cy="12" r="10.600" fill="url(#g114)" stroke="#167a2a" stroke-width="1.800"/><path d="M8.500 5.500L18 12L8.500 18.500Z" fill="#fff"/><rect x="11" y="19" width="19" height="9" fill="#1f8a1f" stroke="#222" stroke-width="1.400"/><rect x="20" y="19.700" width="9.300" height="7.600" fill="#e01a1a"/></svg><div class="t m" style="left:343px;top:1042.1px;line-height:34px;color:#000;"><span class="l" style="letter-spacing:-0.443px;">Coverage As</span></div><svg class="a" style="left:890px;top:1050px;" width="10" height="16" viewBox="0 0 10 16"><path d="M1.5 1.5L8 8L1.5 14.5" fill="none" stroke="#222" stroke-width="1.5"/></svg><svg class="a" style="left:300px;top:1082px" width="29" height="29" viewBox="0 0 30 30"><defs><linearGradient id="g115" x1="0" y1="0" x2="0" y2="1"><stop offset="0" stop-color="#5cbf5c"/><stop offset="1" stop-color="#1d8a2d"/></linearGradient></defs><circle cx="15" cy="15" r="13.6" fill="url(#g115)" stroke="#167a2a" stroke-width="2"/><path d="M11 7.5L22 15L11 22.5Z" fill="#fff"/></svg><div class="t m" style="left:343px;top:1080.1px;line-height:34px;color:#000;">运行方式<span class="l" style="font-size:24.26px;letter-spacing:-0.561px;">(R)</span></div><svg class="a" style="left:890px;top:1088px;" width="10" height="16" viewBox="0 0 10 16"><path d="M1.5 1.5L8 8L1.5 14.5" fill="none" stroke="#222" stroke-width="1.5"/></svg><div class="a" style="left:295px;top:1115px;width:616px;height:38px;background:#91c9f7;"></div><svg class="a" style="left:300px;top:1120px" width="30" height="30" viewBox="0 0 30 30"><defs><linearGradient id="g116" x1="0" y1="0" x2="1" y2="0"><stop offset="0" stop-color="#e4f2d0"/><stop offset=".5" stop-color="#a8d490"/><stop offset="1" stop-color="#5fa848"/></linearGradient></defs><g stroke="#1f4a3c" stroke-width="1.900" fill="none" stroke-linecap="round" stroke-linejoin="round"><path d="M9.100 6.200V0.800M6.300 9.100H0.800"/><path d="M14.600 7.300L17.200 4.700V2.600"/><path d="M20.300 9.100H23.500L25.300 10.900H27.900"/><path d="M24.300 16.700H27.400L29.500 19.200"/><path d="M7.800 14.600L5.200 17H2.300"/><path d="M8.900 20.300V23L11 25V27.600"/><path d="M16.700 24.500V27.100L19.800 29.400"/></g><circle cx="9.600" cy="9.800" r="2.900" fill="#cfe8b8" stroke="#1a6a80" stroke-width="1.600"/><path d="M8.800 10.800L11 8.600L12 10.400L10.200 12Z" fill="#2f8a2a"/><g transform="rotate(42.700 15.400 16.100)"><ellipse cx="15.400" cy="16.100" rx="9" ry="6.100" fill="url(#g116)" stroke="#1a6a80" stroke-width="1.900"/><path d="M8.500 17.300H22.500" stroke="#3f8f2e" stroke-width="1.500"/><path d="M9 14.300H21.500" stroke="#f0f8e4" stroke-width="1.200" opacity=".8"/></g></svg><div class="t m" style="left:343px;top:1118.1px;line-height:34px;color:#000;">调试方式<span class="l" style="font-size:25.78px;letter-spacing:-0.596px;">(D)</span></div><svg class="a" style="left:890px;top:1126px;" width="10" height="16" viewBox="0 0 10 16"><path d="M1.5 1.5L8 8L1.5 14.5" fill="none" stroke="#222" stroke-width="1.5"/></svg><div class="t m" style="left:343px;top:1156.1px;line-height:34px;color:#000;">概要分析方式<span class="l" style="font-size:24.47px;letter-spacing:-0.544px;">(P)</span></div><svg class="a" style="left:890px;top:1164px;" width="10" height="16" viewBox="0 0 10 16"><path d="M1.5 1.5L8 8L1.5 14.5" fill="none" stroke="#222" stroke-width="1.5"/></svg><div class="t m" style="left:343px;top:1194.1px;line-height:34px;color:#000;">从本地历史记录复原<span class="l" style="font-size:23.50px;letter-spacing:-0.488px;">(Y)...</span></div><div class="t m" style="left:343px;top:1232.1px;line-height:34px;color:#000;"><span class="l" style="letter-spacing:-0.447px;">Web Service</span></div><svg class="a" style="left:890px;top:1240px;" width="10" height="16" viewBox="0 0 10 16"><path d="M1.5 1.5L8 8L1.5 14.5" fill="none" stroke="#222" stroke-width="1.5"/></svg><div class="t m" style="left:343px;top:1270.1px;line-height:34px;color:#000;">小组<span class="l" style="font-size:23.50px;letter-spacing:-0.779px;">(E)</span></div><svg class="a" style="left:890px;top:1278px;" width="10" height="16" viewBox="0 0 10 16"><path d="M1.5 1.5L8 8L1.5 14.5" fill="none" stroke="#222" stroke-width="1.5"/></svg><div class="t m" style="left:343px;top:1308.1px;line-height:34px;color:#000;">比较对象<span class="l" style="letter-spacing:-0.557px;">(A)</span></div><svg class="a" style="left:890px;top:1316px;" width="10" height="16" viewBox="0 0 10 16"><path d="M1.5 1.5L8 8L1.5 14.5" fill="none" stroke="#222" stroke-width="1.5"/></svg><div class="t m" style="left:343px;top:1346.1px;line-height:34px;color:#000;">替换为<span class="l" style="font-size:24.11px;letter-spacing:-0.491px;">(L)</span></div><svg class="a" style="left:890px;top:1354px;" width="10" height="16" viewBox="0 0 10 16"><path d="M1.5 1.5L8 8L1.5 14.5" fill="none" stroke="#222" stroke-width="1.5"/></svg><svg class="a" style="left:302px;top:1388px" width="24" height="24" viewBox="0 0 24 24"><rect x="1" y="1" width="22" height="22" fill="#fff" stroke="#9aa6c4" stroke-width="1.600"/><path d="M4 11L9.500 17L20 5.500" fill="none" stroke="#5a6a9a" stroke-width="3"/></svg><div class="t m" style="left:343px;top:1384.1px;line-height:34px;color:#000;">验证</div><div class="a" style="left:339px;top:1422px;width:571px;height:1px;background:#d7d7d7;"></div><div class="t m" style="left:343px;top:1429.1px;line-height:34px;color:#000;">属性<span class="l" style="font-size:24.26px;letter-spacing:-0.561px;">(R)</span></div><div class="t m" style="left:774px;top:1429.1px;line-height:34px;color:#000;"><span class="l" style="letter-spacing:0.259px;">Alt+Enter</span></div>
<div class="a" style="left:908px;top:1112px;width:517px;height:165px;background:#f2f2f2;border:1px solid #ccc;box-sizing:border-box;box-shadow:4px 4px 4px rgba(0,0,0,.45);"></div><svg class="a" style="left:916px;top:1120px" width="29" height="30" viewBox="0 0 29 30"><rect x="13" y="1" width="14.500" height="28" fill="#eef0f6" stroke="#8a8a60" stroke-width="1.800"/><path d="M13 9.500H27.500M13 15H27.500" stroke="#8a8a60" stroke-width="1.400"/><rect x="16" y="4" width="4" height="3" fill="#1f9a4a"/><rect x="21" y="4" width="4.500" height="3" fill="#c4c8dc"/><rect x="16" y="18" width="9" height="8" fill="#c4c8dc"/><path d="M2.500 16.500L14 22.700L2.500 29Z" fill="#3fae5a" stroke="#1f7a3a" stroke-width="1.400" stroke-linejoin="round"/></svg><div class="t m" style="left:959px;top:1118.1px;line-height:34px;color:#000;"><span class="l" style="font-size:25.24px;letter-spacing:-0.526px;">1 </span>在服务器上调试</div><div class="t m" style="left:1217px;top:1118.1px;line-height:34px;color:#000;"><span class="l" style="letter-spacing:0.309px;">Alt+Shift+D</span>，<span class="l" style="letter-spacing:0.309px;">R</span></div><svg class="a" style="left:916px;top:1159px" width="29" height="26" viewBox="0 0 29 26"><defs><linearGradient id="g117" x1="0" y1="0" x2="0" y2="1"><stop offset="0" stop-color="#c4a24a"/><stop offset="1" stop-color="#8f8257"/></linearGradient></defs><rect x="1.500" y="2" width="26" height="22" fill="#f2f9fe" stroke="url(#g117)" stroke-width="2"/><rect x="0.500" y="1" width="28" height="5.500" fill="#5ab2ea"/><rect x="0.500" y="1" width="28" height="1.600" fill="#2f7ac4"/><path d="M13.500 10H17V17.500Q17 21.500 13.200 21.500Q11.500 21.500 10.500 20.600V18.400Q11.700 19.500 13 19.500Q14.800 19.500 14.800 17.200V12H13.500Z" fill="#3a6ea8"/></svg><div class="t m" style="left:959px;top:1156.1px;line-height:34px;color:#000;"><span class="l" style="font-size:24.81px;letter-spacing:-0.571px;">2 Java </span>应用程序</div><div class="t m" style="left:1224px;top:1156.1px;line-height:34px;color:#000;"><span class="l" style="letter-spacing:0.207px;">Alt+Shift+D</span>，<span class="l" style="letter-spacing:0.207px;">J</span></div><div class="a" style="left:911px;top:1191px;width:511px;height:38px;background:#91c9f7;"></div><svg class="a" style="left:913px;top:1194px" width="35" height="31" viewBox="0 0 35 31"><defs><linearGradient id="g118" x1="0" y1="1" x2="1" y2="0"><stop offset="0" stop-color="#a4b41c"/><stop offset="1" stop-color="#ccd02c"/></linearGradient></defs><path d="M3 26Q2 13 14 10T32 4Q34 17 26 23.500T5 27Z" fill="url(#g118)"/><path d="M2 29Q14 27 26 14" fill="none" stroke="#5f9a2a" stroke-width="1.600"/><path d="M1 27.500H6V30.500H1Z" fill="#4f9a3a"/></svg><div class="t m" style="left:959px;top:1194.1px;line-height:34px;color:#000;"><span class="l" style="letter-spacing:-0.036px;">3 Spring Boot App</span></div><div class="t m" style="left:1217px;top:1194.1px;line-height:34px;color:#000;"><span class="l" style="letter-spacing:0.428px;">Alt+Shift+D</span>，<span class="l" style="letter-spacing:0.428px;">B</span></div><div class="a" style="left:955px;top:1232px;width:467px;height:1px;background:#d7d7d7;"></div><div class="t m" style="left:959px;top:1240.1px;line-height:34px;color:#000;">调试<span class="l" style="font-size:23.68px;letter-spacing:-0.414px;"> </span>配置<span class="l" style="font-size:23.68px;letter-spacing:-0.414px;">(B)...</span></div>
<svg class="a" style="left:905px;top:1210px;" width="535" height="40" viewBox="0 0 535 40"><path d="M6 27.400C80 28.600 170 29.200 246 28.400S370 23.500 425 19S490 15.500 511 15.700Q520 16 525 22" fill="none" stroke="#e8402a" stroke-width="5.200" stroke-linecap="round"/></svg>
</body></html>
